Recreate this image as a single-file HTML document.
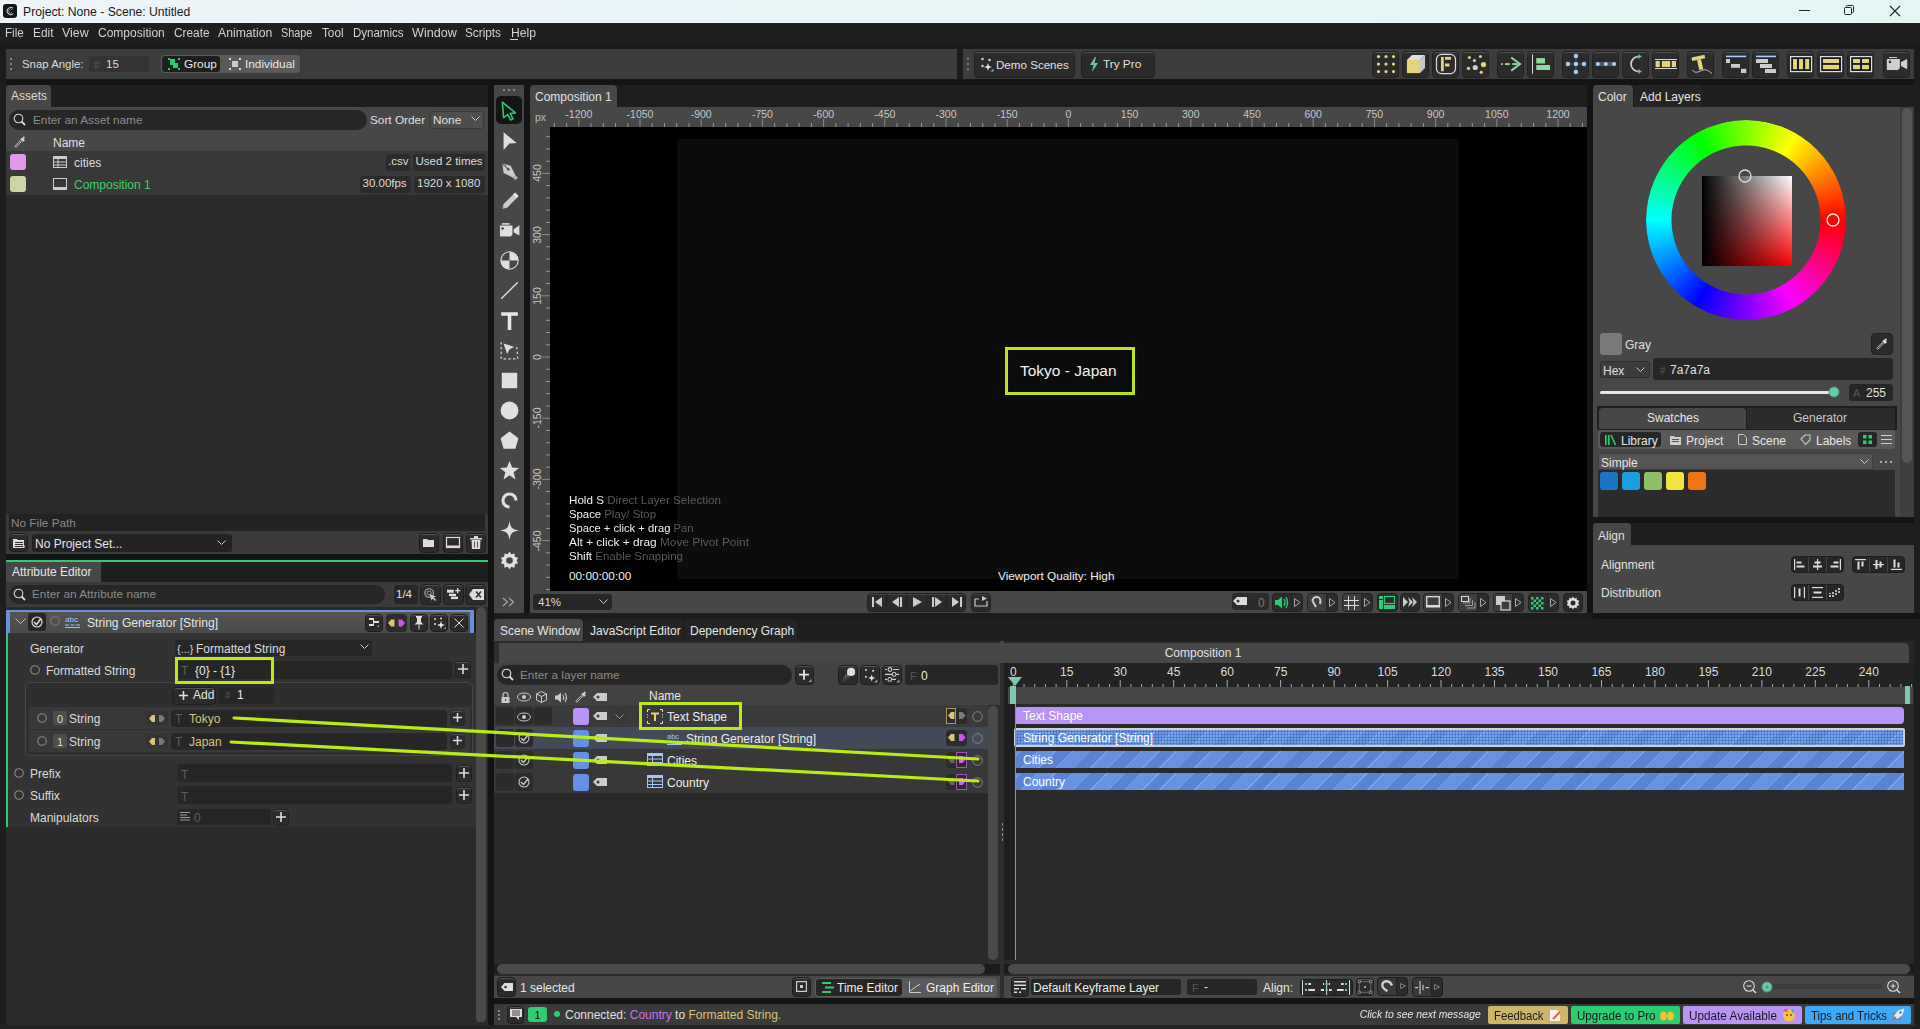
<!DOCTYPE html>
<html><head><meta charset="utf-8">
<style>
*{box-sizing:border-box;margin:0;padding:0}
html,body{width:1920px;height:1029px;overflow:hidden;background:#1c1c1c;font-family:"Liberation Sans",sans-serif;font-size:12px;color:#dcdcdc}
.a{position:absolute}
.t{position:absolute;white-space:nowrap;line-height:1}
svg{position:absolute;overflow:visible}
</style></head><body>
<div class="a" style="left:0px;top:0px;width:1920px;height:23px;background:linear-gradient(90deg,#eef3f7 0%,#e8f4f7 35%,#e3f6f4 100%);"></div>
<div class="a" style="left:3px;top:4px;width:14px;height:14px;background:#141414;border-radius:3px"></div>
<svg style="left:3px;top:4px;" width="14" height="14" viewBox="0 0 14 14"><path d="M10.2 4.3 A3.6 3.6 0 1 0 10.2 9.7" fill="none" stroke="#cfcfcf" stroke-width="1.1"/><path d="M9 5.6 A2 2 0 1 0 9 8.4" fill="none" stroke="#9a9a9a" stroke-width="0.8"/></svg>
<div class="t" style="left:23px;top:5.67px;font-size:12.2px;color:#1a1a1a;">Project: None - Scene: Untitled</div>
<div class="a" style="left:1799px;top:10px;width:11px;height:1px;background:#222;"></div>
<svg style="left:1843px;top:4px;" width="12" height="12" viewBox="0 0 12 12"><rect x="1.5" y="3.5" width="7" height="7" rx="1" fill="none" stroke="#222" stroke-width="1"/><path d="M3.5 3.5 V2.5 a1 1 0 0 1 1 -1 H9.5 a1 1 0 0 1 1 1 V7.5 a1 1 0 0 1 -1 1 H8.5" fill="none" stroke="#222" stroke-width="1"/></svg>
<svg style="left:1889px;top:4.5px;" width="12" height="12" viewBox="0 0 12 12"><path d="M1 1 L11 11 M11 1 L1 11" stroke="#222" stroke-width="1.1"/></svg>
<div class="a" style="left:0px;top:23px;width:1920px;height:20px;background:#1f1f1f;"></div>
<div class="a" style="left:0px;top:43px;width:1920px;height:6px;background:#1b1b1b;"></div>
<div class="t" style="left:5px;top:26.84px;font-size:12px;color:#d2d2d2;transform:scaleX(0.9696);transform-origin:left;">File</div>
<div class="t" style="left:32.5px;top:26.84px;font-size:12px;color:#d2d2d2;transform:scaleX(0.9914);transform-origin:left;">Edit</div>
<div class="t" style="left:62px;top:26.84px;font-size:12px;color:#d2d2d2;transform:scaleX(1.0370);transform-origin:left;">View</div>
<div class="t" style="left:97.5px;top:26.84px;font-size:12px;color:#d2d2d2;transform:scaleX(1.0008);transform-origin:left;">Composition</div>
<div class="t" style="left:173.5px;top:26.84px;font-size:12px;color:#d2d2d2;transform:scaleX(0.9856);transform-origin:left;">Create</div>
<div class="t" style="left:218.25px;top:26.84px;font-size:12px;color:#d2d2d2;transform:scaleX(1.0166);transform-origin:left;">Animation</div>
<div class="t" style="left:281.25px;top:26.84px;font-size:12px;color:#d2d2d2;transform:scaleX(0.9006);transform-origin:left;">Shape</div>
<div class="t" style="left:321.75px;top:26.84px;font-size:12px;color:#d2d2d2;transform:scaleX(0.9766);transform-origin:left;">Tool</div>
<div class="t" style="left:352.5px;top:26.84px;font-size:12px;color:#d2d2d2;transform:scaleX(0.9587);transform-origin:left;">Dynamics</div>
<div class="t" style="left:412px;top:26.84px;font-size:12px;color:#d2d2d2;transform:scaleX(1.0485);transform-origin:left;">Window</div>
<div class="t" style="left:465px;top:26.84px;font-size:12px;color:#d2d2d2;transform:scaleX(0.9816);transform-origin:left;">Scripts</div>
<div class="t" style="left:510.5px;top:26.84px;font-size:12px;color:#d2d2d2;transform:scaleX(1.0129);transform-origin:left;">Help</div>
<div class="a" style="left:510px;top:39px;width:8px;height:1px;background:#d2d2d2;"></div>
<div class="a" style="left:6px;top:49px;width:951px;height:30px;background:#3c3c3c;"></div>
<div class="a" style="left:6px;top:79px;width:1908px;height:6px;background:#141414;"></div>
<div class="a" style="left:10px;top:58px;width:2px;height:2px;background:#888;"></div>
<div class="a" style="left:10px;top:63px;width:2px;height:2px;background:#888;"></div>
<div class="a" style="left:10px;top:68px;width:2px;height:2px;background:#888;"></div>
<div class="t" style="left:22px;top:59.35px;font-size:11.4px;color:#dcdcdc;">Snap Angle:</div>
<div class="a" style="left:89px;top:56px;width:60px;height:16px;background:#333333;border-radius:3px"></div>
<div class="t" style="left:94px;top:60.53px;font-size:10px;color:#5a5a5a;">#</div>
<div class="t" style="left:106px;top:59.27px;font-size:11.5px;color:#dcdcdc;">15</div>
<div class="a" style="left:161px;top:55px;width:139px;height:18px;background:#5a5a5a;border-radius:4px"></div>
<div class="a" style="left:162px;top:56px;width:58px;height:16px;background:#1e1e1e;border-radius:3px"></div>
<svg style="left:168px;top:58px;" width="12" height="12" viewBox="0 0 12 12"><rect x="0" y="0" width="2" height="2" fill="#2ecc71"/><rect x="10" y="0" width="2" height="2" fill="#2ecc71"/><rect x="0" y="10" width="2" height="2" fill="#2ecc71"/><rect x="10" y="10" width="2" height="2" fill="#2ecc71"/><rect x="2" y="1" width="5" height="6" fill="#2ecc71"/><rect x="5" y="5" width="5" height="5" fill="#2ecc71"/></svg>
<div class="t" style="left:184px;top:59.01px;font-size:11.8px;color:#e8e8e8;">Group</div>
<svg style="left:229px;top:58px;" width="12" height="12" viewBox="0 0 12 12"><rect x="0" y="0" width="2" height="2" fill="#ddd"/><rect x="10" y="0" width="2" height="2" fill="#ddd"/><rect x="0" y="10" width="2" height="2" fill="#ddd"/><rect x="10" y="10" width="2" height="2" fill="#ddd"/><rect x="3" y="3" width="6" height="6" fill="#ccc"/></svg>
<div class="t" style="left:245px;top:59.01px;font-size:11.8px;color:#e8e8e8;">Individual</div>
<div class="a" style="left:963px;top:49px;width:951px;height:30px;background:#3c3c3c;"></div>
<div class="a" style="left:967px;top:58px;width:2px;height:2px;background:#777;"></div>
<div class="a" style="left:967px;top:63px;width:2px;height:2px;background:#777;"></div>
<div class="a" style="left:967px;top:68px;width:2px;height:2px;background:#777;"></div>
<div class="a" style="left:974px;top:51px;width:101px;height:27px;background:#2b2b2b;border:1px solid #222;border-radius:4px;box-shadow:inset 0 1px 0 rgba(255,255,255,0.18)"></div>
<svg style="left:981px;top:57px;" width="16" height="16" viewBox="0 0 16 16"><circle cx="1.5" cy="2" r="1.3" fill="#ccc"/><circle cx="8.5" cy="3" r="1.3" fill="#ccc"/><circle cx="1.5" cy="9" r="1.3" fill="#ccc"/><path d="M7 6 L8 9 L11 10 L8 11 L7 14 L6 11 L3 10 L6 9Z" fill="#e6e6e6"/><path d="M9.5 14.5 L12.5 11.5 V14.5Z" fill="#6cc9a5"/></svg>
<div class="t" style="left:996px;top:59.18px;font-size:11.6px;color:#e0e0e0;">Demo Scenes</div>
<div class="a" style="left:1076px;top:63px;width:2px;height:2px;background:#2a2a2a;border-radius:1px"></div>
<div class="a" style="left:1081px;top:51px;width:74px;height:27px;background:#2b2b2b;border:1px solid #222;border-radius:4px;box-shadow:inset 0 1px 0 rgba(255,255,255,0.18)"></div>
<svg style="left:1089px;top:57px;" width="10" height="15" viewBox="0 0 10 15"><path d="M6 0 L1 8 L4.5 8 L3 15 L9 6 L5.5 6 L7 0Z" fill="#6cc9a5"/></svg>
<div class="t" style="left:1103px;top:59.01px;font-size:11.8px;color:#e0e0e0;">Try Pro</div>
<div class="a" style="left:1372px;top:51px;width:27px;height:27px;background:#2b2b2b;border:1px solid #222;border-radius:4px;box-shadow:inset 0 1px 0 rgba(255,255,255,0.18)"></div>
<svg style="left:1376px;top:55px;" width="18" height="18" viewBox="0 0 18 18"><circle cx="2.5" cy="1.6" r="1.6" fill="#e4d479"/><circle cx="2.5" cy="9.1" r="1.6" fill="#e4d479"/><circle cx="2.5" cy="16.6" r="1.6" fill="#e4d479"/><circle cx="10.0" cy="1.6" r="1.6" fill="#e4d479"/><circle cx="10.0" cy="9.1" r="1.6" fill="#e4d479"/><circle cx="10.0" cy="16.6" r="1.6" fill="#e4d479"/><circle cx="17.5" cy="1.6" r="1.6" fill="#e4d479"/><circle cx="17.5" cy="9.1" r="1.6" fill="#e4d479"/><circle cx="17.5" cy="16.6" r="1.6" fill="#e4d479"/></svg>
<div class="a" style="left:1402px;top:51px;width:27px;height:27px;background:#2b2b2b;border:1px solid #222;border-radius:4px;box-shadow:inset 0 1px 0 rgba(255,255,255,0.18)"></div>
<svg style="left:1406px;top:55px;" width="18" height="18" viewBox="0 0 18 18"><path d="M0.9 5 L6 0 L19 0 L14 5Z" fill="#e0e0e0"/><path d="M14 5 L19 0 V13 L14 18.1Z" fill="#c8c8c8"/><rect x="0.9" y="5" width="13.1" height="13.1" fill="#e4d479"/></svg>
<div class="a" style="left:1432px;top:51px;width:27px;height:27px;background:#2b2b2b;border:1px solid #222;border-radius:4px;box-shadow:inset 0 1px 0 rgba(255,255,255,0.18)"></div>
<svg style="left:1436px;top:55px;" width="18" height="18" viewBox="0 0 18 18"><rect x="0.5" y="-0.6" width="19" height="19.2" rx="5" fill="none" stroke="#ddd" stroke-width="1.2"/><rect x="5" y="1.9" width="2.75" height="14.35" fill="#e4d479"/><rect x="9" y="1.9" width="6" height="2.85" fill="#e4d479"/><rect x="9" y="8.5" width="4.4" height="3" fill="#e4d479"/></svg>
<div class="a" style="left:1462px;top:51px;width:27px;height:27px;background:#2b2b2b;border:1px solid #222;border-radius:4px;box-shadow:inset 0 1px 0 rgba(255,255,255,0.18)"></div>
<svg style="left:1466px;top:55px;" width="18" height="18" viewBox="0 0 18 18"><circle cx="3.4" cy="2.5" r="1.5" fill="#e4d479"/><circle cx="14.4" cy="1.5" r="1.5" fill="#ccc"/><circle cx="8.4" cy="5.6" r="1.6" fill="#ccc"/><circle cx="17.5" cy="9.6" r="2.6" fill="#e4d479"/><circle cx="2.5" cy="13.4" r="1.6" fill="#e4d479"/><circle cx="9.25" cy="12.5" r="2.6" fill="#ccc"/><circle cx="15.25" cy="17.25" r="1.6" fill="#e4d479"/></svg>
<div class="a" style="left:1497px;top:51px;width:27px;height:27px;background:#2b2b2b;border:1px solid #222;border-radius:4px;box-shadow:inset 0 1px 0 rgba(255,255,255,0.18)"></div>
<svg style="left:1501px;top:55px;" width="18" height="18" viewBox="0 0 18 18"><rect x="0" y="8.1" width="1.75" height="1.9" fill="#8fd9a0"/><rect x="4" y="8.1" width="4.75" height="1.9" fill="#8fd9a0"/><rect x="11.25" y="8.1" width="5.25" height="1.9" fill="#8fd9a0"/><path d="M10.25 2.5 L19 9 L10.25 15.6" fill="none" stroke="#8fd9a0" stroke-width="2"/></svg>
<div class="a" style="left:1527px;top:51px;width:27px;height:27px;background:#2b2b2b;border:1px solid #222;border-radius:4px;box-shadow:inset 0 1px 0 rgba(255,255,255,0.18)"></div>
<svg style="left:1531px;top:55px;" width="18" height="18" viewBox="0 0 18 18"><rect x="1" y="-0.6" width="1" height="19.3" fill="#ddd"/><rect x="5.25" y="3.1" width="8.75" height="5.4" fill="#8fd9a0"/><rect x="5.25" y="10" width="13.75" height="5" fill="#8fd9a0"/></svg>
<div class="a" style="left:1562px;top:51px;width:27px;height:27px;background:#2b2b2b;border:1px solid #222;border-radius:4px;box-shadow:inset 0 1px 0 rgba(255,255,255,0.18)"></div>
<svg style="left:1566px;top:55px;" width="18" height="18" viewBox="0 0 18 18"><rect x="9.3" y="1" width="1.4" height="16" fill="#555"/><rect x="1.9" y="8.3" width="16" height="1.4" fill="#555"/><circle cx="9.9" cy="1" r="2.2" fill="#9fd0ff"/><circle cx="9.9" cy="9" r="2.2" fill="#9fd0ff"/><circle cx="9.9" cy="16.9" r="2.2" fill="#9fd0ff"/><circle cx="1.9" cy="9" r="2.2" fill="#9fd0ff"/><circle cx="18" cy="9" r="2.2" fill="#9fd0ff"/></svg>
<div class="a" style="left:1592px;top:51px;width:27px;height:27px;background:#2b2b2b;border:1px solid #222;border-radius:4px;box-shadow:inset 0 1px 0 rgba(255,255,255,0.18)"></div>
<svg style="left:1596px;top:55px;" width="18" height="18" viewBox="0 0 18 18"><rect x="-0.5" y="7" width="21" height="4" rx="2" fill="#555"/><circle cx="1.8" cy="9" r="2.1" fill="#9fd0ff"/><circle cx="9.8" cy="9" r="2.1" fill="#9fd0ff"/><circle cx="18" cy="9" r="2.1" fill="#9fd0ff"/></svg>
<div class="a" style="left:1622px;top:51px;width:27px;height:27px;background:#2b2b2b;border:1px solid #222;border-radius:4px;box-shadow:inset 0 1px 0 rgba(255,255,255,0.18)"></div>
<svg style="left:1626px;top:55px;" width="18" height="18" viewBox="0 0 18 18"><path d="M13 1.5 A8 7.5 0 0 0 13 16.5" fill="none" stroke="#cfcfcf" stroke-width="1.7"/><path d="M13 -0.5 V3.5 M11 1.5 H15.5 M13 14.5 V18.5 M11 16.5 H15.5" stroke="#7cc98e" stroke-width="1.3"/></svg>
<div class="a" style="left:1652px;top:51px;width:27px;height:27px;background:#2b2b2b;border:1px solid #222;border-radius:4px;box-shadow:inset 0 1px 0 rgba(255,255,255,0.18)"></div>
<svg style="left:1656px;top:55px;" width="18" height="18" viewBox="0 0 18 18"><rect x="-1" y="4" width="22" height="1" fill="#ddd"/><rect x="-1" y="13" width="22" height="1" fill="#ddd"/><rect x="-0.4" y="6" width="4.2" height="6" fill="#e4d479"/><rect x="5.9" y="6" width="8.3" height="6" fill="#e4d479"/><rect x="15.8" y="6" width="4.2" height="6" fill="#e4d479"/></svg>
<div class="a" style="left:1687px;top:51px;width:27px;height:27px;background:#2b2b2b;border:1px solid #222;border-radius:4px;box-shadow:inset 0 1px 0 rgba(255,255,255,0.18)"></div>
<svg style="left:1691px;top:55px;" width="18" height="18" viewBox="0 0 18 18"><path d="M0.5 2.5 L13.5 -0.2 L14.2 3.3 L1.2 6Z" fill="#e4d479"/><path d="M6 5 L10 4.2 L12.3 14.2 L8.3 15Z" fill="#e4d479"/><path d="M1.5 15 C4 19.5 9 16 12 15 C15 14 18 16 21 18.5" fill="none" stroke="#cfcfcf" stroke-width="0.9"/></svg>
<div class="a" style="left:1722px;top:51px;width:27px;height:27px;background:#2b2b2b;border:1px solid #222;border-radius:4px;box-shadow:inset 0 1px 0 rgba(255,255,255,0.18)"></div>
<svg style="left:1726px;top:55px;" width="18" height="18" viewBox="0 0 18 18"><rect x="0" y="0.6" width="20.3" height="1.6" fill="#9fd0ff"/><rect x="0" y="4" width="4" height="4" fill="#ccc"/><rect x="5" y="9" width="9" height="3.8" fill="#ccc"/><rect x="15" y="13.8" width="5.3" height="4.2" fill="#ccc"/></svg>
<div class="a" style="left:1752px;top:51px;width:27px;height:27px;background:#2b2b2b;border:1px solid #222;border-radius:4px;box-shadow:inset 0 1px 0 rgba(255,255,255,0.18)"></div>
<svg style="left:1756px;top:55px;" width="18" height="18" viewBox="0 0 18 18"><rect x="0" y="0.6" width="20" height="1.6" fill="#9fd0ff"/><rect x="0" y="4" width="12" height="4" fill="#ccc"/><rect x="4" y="9" width="12" height="4" fill="#ccc"/><rect x="9" y="14" width="11" height="4" fill="#ccc"/></svg>
<div class="a" style="left:1787px;top:51px;width:27px;height:27px;background:#2b2b2b;border:1px solid #222;border-radius:4px;box-shadow:inset 0 1px 0 rgba(255,255,255,0.18)"></div>
<svg style="left:1791px;top:55px;" width="18" height="18" viewBox="0 0 18 18"><rect x="-0.4" y="1.6" width="21" height="15" fill="#1a1a22" stroke="#ddd" stroke-width="1.2"/><rect x="2" y="4" width="4" height="10.2" fill="#e4d479"/><rect x="8" y="4" width="4" height="10.2" fill="#e4d479"/><rect x="14.2" y="4" width="4" height="10.2" fill="#e4d479"/></svg>
<div class="a" style="left:1817px;top:51px;width:27px;height:27px;background:#2b2b2b;border:1px solid #222;border-radius:4px;box-shadow:inset 0 1px 0 rgba(255,255,255,0.18)"></div>
<svg style="left:1821px;top:55px;" width="18" height="18" viewBox="0 0 18 18"><rect x="-0.4" y="1.6" width="21" height="15" fill="#1a1a22" stroke="#ddd" stroke-width="1.2"/><rect x="2" y="4" width="16" height="4" fill="#e4d479"/><rect x="2" y="9.9" width="16" height="4.3" fill="#e4d479"/></svg>
<div class="a" style="left:1847px;top:51px;width:27px;height:27px;background:#2b2b2b;border:1px solid #222;border-radius:4px;box-shadow:inset 0 1px 0 rgba(255,255,255,0.18)"></div>
<svg style="left:1851px;top:55px;" width="18" height="18" viewBox="0 0 18 18"><rect x="-0.4" y="1.6" width="21" height="15" fill="#1a1a22" stroke="#ddd" stroke-width="1.2"/><rect x="2" y="4" width="7" height="4" fill="#e4d479"/><rect x="11" y="4" width="7" height="4" fill="#e4d479"/><rect x="2" y="9.9" width="7" height="4.3" fill="#e4d479"/><rect x="11" y="9.9" width="7" height="4.3" fill="#e4d479"/></svg>
<div class="a" style="left:1883px;top:51px;width:27px;height:27px;background:#2b2b2b;border:1px solid #222;border-radius:4px;box-shadow:inset 0 1px 0 rgba(255,255,255,0.18)"></div>
<svg style="left:1887px;top:55px;" width="18" height="18" viewBox="0 0 18 18"><rect x="2" y="2" width="8" height="1" fill="#ccc"/><path d="M-0.2 4 H12.9 V13 L11 14.9 H-0.2Z" fill="#d0d0d0"/><circle cx="3" cy="6.9" r="1.3" fill="#333"/><path d="M14 6.9 L20.2 4 V14.2 L14 10.9Z" fill="#d0d0d0"/></svg>
<div class="a" style="left:1492px;top:63px;width:2px;height:2px;background:#2a2a2a;border-radius:1px"></div>
<div class="a" style="left:1557px;top:63px;width:2px;height:2px;background:#2a2a2a;border-radius:1px"></div>
<div class="a" style="left:1682px;top:63px;width:2px;height:2px;background:#2a2a2a;border-radius:1px"></div>
<div class="a" style="left:1717px;top:63px;width:2px;height:2px;background:#2a2a2a;border-radius:1px"></div>
<div class="a" style="left:1782px;top:63px;width:2px;height:2px;background:#2a2a2a;border-radius:1px"></div>
<div class="a" style="left:1877px;top:63px;width:2px;height:2px;background:#2a2a2a;border-radius:1px"></div>
<div class="a" style="left:6px;top:85px;width:482px;height:22px;background:#1e1e1e;"></div>
<div class="a" style="left:6px;top:85px;width:45px;height:22px;background:#474747;border-radius:4px 4px 0 0"></div>
<div class="t" style="left:11px;top:89.84px;font-size:12px;color:#dcdcdc;">Assets</div>
<div class="a" style="left:6px;top:107px;width:482px;height:44px;background:#474747;"></div>
<div class="a" style="left:9px;top:110px;width:358px;height:20px;background:#262626;border-radius:10px"></div>
<svg style="left:13px;top:113px;" width="14" height="14" viewBox="0 0 14 14"><circle cx="5.5" cy="5.5" r="4.3" fill="none" stroke="#ddd" stroke-width="1.1"/><path d="M8.5 8.5 L12 12" stroke="#ddd" stroke-width="1.8"/></svg>
<div class="t" style="left:33px;top:115.01px;font-size:11.8px;color:#8c8c8c;">Enter an Asset name</div>
<div class="t" style="left:370px;top:115.01px;font-size:11.8px;color:#e0e0e0;">Sort Order</div>
<div class="a" style="left:430px;top:111px;width:54px;height:18px;background:#4e4e4e;border:1px solid #3a3a3a;border-radius:3px"></div>
<div class="t" style="left:433px;top:115.01px;font-size:11.8px;color:#e0e0e0;">None</div>
<svg style="left:471px;top:116px;" width="9" height="6" viewBox="0 0 9 6"><path d="M0.5 0.5 L4.5 4.5 L8.5 0.5" fill="none" stroke="#ccc" stroke-width="1"/></svg>
<svg style="left:14px;top:136px;" width="12" height="12" viewBox="0 0 12 12"><path d="M1 11 L7 5" stroke="#bbb" stroke-width="2.2"/><path d="M1.5 10.5 L6.5 5.5" stroke="#474747" stroke-width="0.9"/><path d="M6 3 L9 6 L11 4 L10 3 L11 1 L9.5 0.5 L8 2Z" fill="#ccc"/></svg>
<div class="t" style="left:53px;top:136.84px;font-size:12px;color:#e0e0e0;">Name</div>
<div class="a" style="left:6px;top:151px;width:482px;height:44px;background:#383838;"></div>
<div class="a" style="left:10px;top:154px;width:16px;height:16px;background:#dd99ee;border-radius:3px"></div>
<div class="a" style="left:10px;top:176px;width:16px;height:16px;background:#cdd4a4;border-radius:3px"></div>
<svg style="left:53px;top:156px;" width="14" height="12" viewBox="0 0 14 12"><rect x="0.5" y="0.5" width="13" height="11" fill="none" stroke="#ccc"/><rect x="0.5" y="0.5" width="13" height="2.5" fill="#ccc"/><path d="M0.5 6 H13.5 M0.5 9 H13.5 M5 3 V11.5" stroke="#ccc" stroke-width="1"/></svg>
<div class="t" style="left:74px;top:156.84px;font-size:12px;color:#dcdcdc;">cities</div>
<svg style="left:53px;top:178px;" width="14" height="12" viewBox="0 0 14 12"><rect x="0.5" y="0.5" width="13" height="11" fill="none" stroke="#ccc"/><rect x="0.5" y="9" width="13" height="2.5" fill="#ccc"/></svg>
<div class="t" style="left:74px;top:178.84px;font-size:12px;color:#3dd068;">Composition 1</div>
<div class="a" style="left:386px;top:154px;width:24px;height:17px;background:#2b2b2b;border-radius:3px"></div>
<div class="t" style="left:388px;top:156.27px;font-size:11.5px;color:#dcdcdc;">.csv</div>
<div class="a" style="left:413px;top:154px;width:72px;height:17px;background:#2b2b2b;border-radius:3px"></div>
<div class="t" style="left:415.5px;top:156.27px;font-size:11.5px;color:#dcdcdc;">Used 2 times</div>
<div class="a" style="left:360px;top:176px;width:51px;height:17px;background:#2b2b2b;border-radius:3px"></div>
<div class="t" style="left:362.5px;top:178.27px;font-size:11.5px;color:#dcdcdc;">30.00fps</div>
<div class="a" style="left:414px;top:176px;width:71px;height:17px;background:#2b2b2b;border-radius:3px"></div>
<div class="t" style="left:417px;top:178.27px;font-size:11.5px;color:#dcdcdc;">1920 x 1080</div>
<div class="a" style="left:6px;top:195px;width:482px;height:319px;background:#2a2a2a;"></div>
<div class="a" style="left:6px;top:514px;width:482px;height:40px;background:#3a3a3a;"></div>
<div class="a" style="left:9px;top:514px;width:476px;height:17px;background:#232323;"></div>
<div class="t" style="left:11px;top:518.01px;font-size:11.8px;color:#8a8a8a;">No File Path</div>
<div class="a" style="left:9px;top:533px;width:19px;height:19px;background:#2b2b2b;border:1px solid #1e1e1e;border-radius:4px;box-shadow:inset 0 1px 0 rgba(255,255,255,0.18)"></div>
<svg style="left:13px;top:537px;" width="12" height="11" viewBox="0 0 12 11"><path d="M0 2 H4 L5 3 H11 V11 H0Z" fill="#ddd"/><rect x="2" y="5" width="8" height="1" fill="#333"/><rect x="2" y="7" width="8" height="1" fill="#333"/><rect x="2" y="9" width="8" height="1" fill="#333"/><path d="M10 10 L12 8 V11Z" fill="#6cc9a5"/></svg>
<div class="a" style="left:32px;top:534px;width:200px;height:18px;background:#232323;border-radius:3px"></div>
<div class="t" style="left:35px;top:537.84px;font-size:12px;color:#e6e6e6;">No Project Set...</div>
<svg style="left:217px;top:540px;" width="9" height="6" viewBox="0 0 9 6"><path d="M0.5 0.5 L4.5 4.5 L8.5 0.5" fill="none" stroke="#ccc" stroke-width="1"/></svg>
<div class="a" style="left:419px;top:533px;width:20px;height:20px;background:#2b2b2b;border:1px solid #1e1e1e;border-radius:4px;box-shadow:inset 0 1px 0 rgba(255,255,255,0.18)"></div>
<div class="a" style="left:443px;top:533px;width:20px;height:20px;background:#2b2b2b;border:1px solid #1e1e1e;border-radius:4px;box-shadow:inset 0 1px 0 rgba(255,255,255,0.18)"></div>
<div class="a" style="left:466px;top:533px;width:20px;height:20px;background:#2b2b2b;border:1px solid #1e1e1e;border-radius:4px;box-shadow:inset 0 1px 0 rgba(255,255,255,0.18)"></div>
<svg style="left:423px;top:537px;" width="12" height="12" viewBox="0 0 12 12"><path d="M0 2 H4 L5 3 H11 V10 H0Z" fill="#ddd"/></svg>
<svg style="left:446px;top:537px;" width="14" height="12" viewBox="0 0 14 12"><rect x="0.5" y="0.5" width="13" height="10" fill="none" stroke="#ddd" stroke-width="1.2"/><rect x="0.5" y="8.5" width="13" height="2" fill="#ddd"/></svg>
<svg style="left:470px;top:536px;" width="12" height="13" viewBox="0 0 12 13"><rect x="0" y="2" width="12" height="1.5" fill="#ddd"/><rect x="4" y="0" width="4" height="2" fill="#ddd"/><path d="M1.5 4 H10.5 L10 13 H2Z" fill="#ddd"/><rect x="4" y="5.5" width="1" height="6" fill="#555"/><rect x="7" y="5.5" width="1" height="6" fill="#555"/></svg>
<div class="a" style="left:6px;top:554px;width:482px;height:6px;background:#141414;"></div>
<div class="a" style="left:6px;top:560px;width:482px;height:2px;background:#2ecc71;"></div>
<div class="a" style="left:6px;top:562px;width:482px;height:20px;background:#1e1e1e;"></div>
<div class="a" style="left:6px;top:562px;width:95px;height:20px;background:#474747;"></div>
<div class="t" style="left:12px;top:565.84px;font-size:12px;color:#e6e6e6;">Attribute Editor</div>
<div class="a" style="left:6px;top:582px;width:482px;height:25px;background:#3a3a3a;"></div>
<div class="a" style="left:9px;top:585px;width:376px;height:19px;background:#262626;border-radius:10px"></div>
<svg style="left:13px;top:588px;" width="14" height="14" viewBox="0 0 14 14"><circle cx="5.5" cy="5.5" r="4.3" fill="none" stroke="#ddd" stroke-width="1.1"/><path d="M8.5 8.5 L12 12" stroke="#ddd" stroke-width="1.8"/></svg>
<div class="t" style="left:32px;top:589.01px;font-size:11.8px;color:#8c8c8c;">Enter an Attribute name</div>
<div class="a" style="left:394px;top:585px;width:24px;height:19px;background:#262626;border-radius:3px"></div>
<div class="t" style="left:396px;top:589.27px;font-size:11.5px;color:#e0e0e0;">1/4</div>
<div class="a" style="left:420px;top:584px;width:21px;height:21px;background:#2b2b2b;border:1px solid #1e1e1e;border-radius:4px;box-shadow:inset 0 1px 0 rgba(255,255,255,0.18)"></div>
<div class="a" style="left:443px;top:584px;width:21px;height:21px;background:#2b2b2b;border:1px solid #1e1e1e;border-radius:4px;box-shadow:inset 0 1px 0 rgba(255,255,255,0.18)"></div>
<div class="a" style="left:465px;top:584px;width:21px;height:21px;background:#2b2b2b;border:1px solid #1e1e1e;border-radius:4px;box-shadow:inset 0 1px 0 rgba(255,255,255,0.18)"></div>
<svg style="left:424px;top:588px;" width="13" height="13" viewBox="0 0 13 13"><circle cx="5.1" cy="5" r="4.3" fill="none" stroke="#aaa" stroke-width="1.1"/><circle cx="5.1" cy="5" r="2" fill="none" stroke="#aaa" stroke-width="0.9"/><path d="M5.5 6 L12 8.5 L9.8 9.6 L12.3 12.1 L11.2 13.1 L8.7 10.6 L7.6 12.8Z" fill="#ccc"/></svg>
<svg style="left:446px;top:588px;" width="15" height="13" viewBox="0 0 15 13"><rect x="1" y="1.7" width="6.8" height="3" fill="#ddd"/><rect x="3" y="5.7" width="7" height="2.4" fill="#ddd"/><rect x="5" y="8.7" width="7" height="2.4" fill="#ddd"/><path d="M11.7 0 V5.2 M9.1 2.6 H14.3" stroke="#ddd" stroke-width="1.3"/></svg>
<svg style="left:469px;top:589px;" width="15" height="11" viewBox="0 0 15 11"><path d="M4 0 H15 V11 H4 L0 5.5Z" fill="#ddd"/><path d="M7 2.5 L12 8.5 M12 2.5 L7 8.5" stroke="#333" stroke-width="1.6"/></svg>
<div class="a" style="left:6px;top:607px;width:482px;height:3px;background:#2a2a2a;"></div>
<div class="a" style="left:6px;top:610px;width:468px;height:23px;background:linear-gradient(#555,#4a4a4a);"></div>
<div class="a" style="left:6px;top:610px;width:468px;height:2px;background:#6a8fdb;"></div>
<div class="a" style="left:6px;top:610px;width:4px;height:23px;background:#6a8fdb;"></div>
<div class="a" style="left:470px;top:610px;width:4px;height:23px;background:#6a8fdb;"></div>
<svg style="left:15px;top:618px;" width="11" height="7" viewBox="0 0 11 7"><path d="M0.5 0.5 L5.5 5.5 L10.5 0.5" fill="none" stroke="#bbb" stroke-width="1"/></svg>
<div class="a" style="left:28px;top:613px;width:18px;height:18px;background:#262626;border-radius:3px"></div>
<svg style="left:31px;top:616px;" width="12" height="12" viewBox="0 0 12 12"><circle cx="6" cy="6" r="5" fill="none" stroke="#ddd" stroke-width="1.2"/><path d="M3 6 L5.5 8.5 L10 2.5" fill="none" stroke="#ddd" stroke-width="1.5"/></svg>
<svg style="left:50px;top:616px;" width="10" height="10" viewBox="0 0 10 10"><circle cx="5" cy="5" r="4.3" fill="none" stroke="#777" stroke-width="1.1"/></svg>
<svg style="left:65px;top:615px;" width="15" height="14" viewBox="0 0 15 14"><text x="0" y="7" font-size="8" fill="#9fc6ff" font-family="Liberation Sans">abc</text><path d="M0 10 H4 M5.5 10 H9.5 M11 10 H15 M0 12.5 H15" stroke="#9fc6ff" stroke-width="1"/></svg>
<div class="t" style="left:87px;top:616.76px;font-size:12.1px;color:#e6e6e6;">String Generator [String]</div>
<div class="a" style="left:365px;top:614px;width:18px;height:18px;background:#2b2b2b;border:1px solid #1e1e1e;border-radius:4px;box-shadow:inset 0 1px 0 rgba(255,255,255,0.18)"></div>
<div class="a" style="left:410px;top:614px;width:18px;height:18px;background:#2b2b2b;border:1px solid #1e1e1e;border-radius:4px;box-shadow:inset 0 1px 0 rgba(255,255,255,0.18)"></div>
<div class="a" style="left:430px;top:614px;width:18px;height:18px;background:#2b2b2b;border:1px solid #1e1e1e;border-radius:4px;box-shadow:inset 0 1px 0 rgba(255,255,255,0.18)"></div>
<div class="a" style="left:450px;top:614px;width:18px;height:18px;background:#2b2b2b;border:1px solid #1e1e1e;border-radius:4px;box-shadow:inset 0 1px 0 rgba(255,255,255,0.18)"></div>
<div class="a" style="left:386px;top:614px;width:21px;height:18px;background:#2b2b2b;border-radius:4px"></div>
<svg style="left:369px;top:618px;" width="10" height="9" viewBox="0 0 10 9"><rect x="0" y="0" width="4" height="2" fill="#ddd"/><rect x="0" y="6" width="4" height="2" fill="#ddd"/><rect x="4" y="0" width="1" height="8" fill="#ddd"/><rect x="5" y="3" width="5" height="2" fill="#ddd"/><path d="M8 9 L10 7 V9Z" fill="#6cc9a5"/></svg>
<svg style="left:388px;top:618px;" width="18" height="10" viewBox="0 0 18 10"><path d="M0 5 L3 1.5 H6.5 V8.5 H3Z" fill="#d9c27a"/><path d="M10.5 1.5 H14 L17 5 L14 8.5 H10.5Z" fill="#cc55ee"/><rect x="8.5" y="0" width="1" height="10" fill="#3a3a3a"/></svg>
<svg style="left:414px;top:616px;" width="10" height="14" viewBox="0 0 10 14"><path d="M2 0 H8 V1.5 L7 2 V6 L9.5 8.5 H0.5 L3 6 V2 L2 1.5Z" fill="#ddd"/><rect x="4.5" y="8.5" width="1" height="5" fill="#ddd"/></svg>
<svg style="left:433px;top:617px;" width="13" height="13" viewBox="0 0 13 13"><circle cx="2" cy="2" r="1" fill="#ddd"/><circle cx="8" cy="1.5" r="1" fill="#ddd"/><circle cx="2" cy="7" r="1" fill="#ddd"/><path d="M8 4 L9 7 L12 8 L9 9 L8 12 L7 9 L4 8 L7 7Z" fill="#eee"/><path d="M11 12 L13 10 V12Z" fill="#6cc9a5"/></svg>
<svg style="left:454px;top:618px;" width="10" height="10" viewBox="0 0 10 10"><path d="M0.5 0.5 L9.5 9.5 M9.5 0.5 L0.5 9.5" stroke="#ddd" stroke-width="1"/></svg>
<div class="a" style="left:6px;top:633px;width:470px;height:194px;background:#323232;"></div>
<div class="a" style="left:6px;top:633px;width:2px;height:194px;background:#2ecc71;"></div>
<div class="a" style="left:476px;top:607px;width:12px;height:418px;background:#2a2a2a;"></div>
<div class="a" style="left:476px;top:607px;width:10px;height:416px;background:#4a4a4a;border-radius:5px"></div>
<div class="t" style="left:30px;top:642.84px;font-size:12px;color:#dcdcdc;">Generator</div>
<div class="a" style="left:175px;top:640px;width:197px;height:16px;background:#262626;border-radius:3px"></div>
<div class="t" style="left:177px;top:643.69px;font-size:11px;color:#dcdcdc;">{...}</div>
<div class="t" style="left:196px;top:642.84px;font-size:12px;color:#dcdcdc;">Formatted String</div>
<svg style="left:360px;top:644px;" width="9" height="6" viewBox="0 0 9 6"><path d="M0.5 0.5 L4.5 4.5 L8.5 0.5" fill="none" stroke="#ccc" stroke-width="1"/></svg>
<svg style="left:30px;top:665px;" width="10" height="10" viewBox="0 0 10 10"><circle cx="5" cy="5" r="4.3" fill="none" stroke="#8a8a8a" stroke-width="1.1"/></svg>
<div class="t" style="left:46px;top:664.84px;font-size:12px;color:#dcdcdc;">Formatted String</div>
<div class="a" style="left:176px;top:661px;width:276px;height:18px;background:#262626;border-radius:3px"></div>
<div class="t" style="left:181px;top:664.84px;font-size:12px;color:#5c5c5c;">T</div>
<div class="t" style="left:195px;top:664.84px;font-size:12px;color:#e6e6e6;">{0} - {1}</div>
<div class="a" style="left:455px;top:661px;width:16px;height:17px;background:#2b2b2b;border:1px solid #222;border-radius:3px;box-shadow:inset 0 1px 0 rgba(255,255,255,0.18)"></div>
<svg style="left:458px;top:664px;" width="10" height="10" viewBox="0 0 10 10"><path d="M5 0 V10 M0 5 H10" stroke="#ddd" stroke-width="1.6"/></svg>
<div class="a" style="left:25px;top:682px;width:448px;height:74px;background:#2e2e2e;border:1.5px solid #474747;border-radius:5px"></div>
<div class="a" style="left:172px;top:687px;width:44px;height:18px;background:#2b2b2b;border:1px solid #1e1e1e;border-radius:4px;box-shadow:inset 0 1px 0 rgba(255,255,255,0.18)"></div>
<svg style="left:179px;top:691px;" width="9" height="9" viewBox="0 0 9 9"><path d="M4.5 0 V9 M0 4.5 H9" stroke="#ddd" stroke-width="1.6"/></svg>
<div class="t" style="left:193px;top:688.84px;font-size:12px;color:#e6e6e6;">Add</div>
<div class="a" style="left:219px;top:687px;width:55px;height:17px;background:#262626;border-radius:3px"></div>
<div class="t" style="left:225px;top:690.53px;font-size:10px;color:#555;">#</div>
<div class="t" style="left:237px;top:688.84px;font-size:12px;color:#e6e6e6;">1</div>
<div class="a" style="left:29px;top:707px;width:441px;height:22px;background:#383838;"></div>
<svg style="left:37px;top:713px;" width="10" height="10" viewBox="0 0 10 10"><circle cx="5" cy="5" r="4.3" fill="none" stroke="#8a8a8a" stroke-width="1.1"/></svg>
<div class="a" style="left:53px;top:711px;width:14px;height:14px;background:#4d4d4d;border-radius:2px"></div>
<div class="t" style="left:60px;top:713.69px;font-size:11px;color:#dcdcdc;transform:translateX(-50%);">0</div>
<div class="t" style="left:69px;top:712.84px;font-size:12px;color:#dcdcdc;">String</div>
<div class="a" style="left:146px;top:711px;width:11px;height:14px;background:#333;border-radius:2px"></div>
<div class="a" style="left:157px;top:711px;width:11px;height:14px;background:#333;border-radius:2px"></div>
<svg style="left:149px;top:715px;" width="16" height="7" viewBox="0 0 16 7"><path d="M0 3.5 L3 0 H6 V7 H3Z" fill="#d9c27a"/><path d="M10 0 H13 L16 3.5 L13 7 H10Z" fill="#7a7a7a"/></svg>
<div class="a" style="left:171px;top:710px;width:276px;height:17px;background:#262626;border-radius:3px"></div>
<div class="t" style="left:175px;top:712.84px;font-size:12px;color:#5c5c5c;">T</div>
<div class="t" style="left:189px;top:712.84px;font-size:12px;color:#d9c27a;">Tokyo</div>
<div class="a" style="left:450px;top:710px;width:15px;height:16px;background:#2b2b2b;border:1px solid #2a2a2a;border-radius:3px;box-shadow:inset 0 1px 0 rgba(255,255,255,0.18)"></div>
<svg style="left:453px;top:713px;" width="9" height="9" viewBox="0 0 9 9"><path d="M4.5 0 V9 M0 4.5 H9" stroke="#ddd" stroke-width="1.5"/></svg>
<div class="a" style="left:29px;top:730px;width:441px;height:22px;background:#383838;"></div>
<svg style="left:37px;top:736px;" width="10" height="10" viewBox="0 0 10 10"><circle cx="5" cy="5" r="4.3" fill="none" stroke="#8a8a8a" stroke-width="1.1"/></svg>
<div class="a" style="left:53px;top:734px;width:14px;height:14px;background:#4d4d4d;border-radius:2px"></div>
<div class="t" style="left:60px;top:736.69px;font-size:11px;color:#dcdcdc;transform:translateX(-50%);">1</div>
<div class="t" style="left:69px;top:735.84px;font-size:12px;color:#dcdcdc;">String</div>
<div class="a" style="left:146px;top:734px;width:11px;height:14px;background:#333;border-radius:2px"></div>
<div class="a" style="left:157px;top:734px;width:11px;height:14px;background:#333;border-radius:2px"></div>
<svg style="left:149px;top:738px;" width="16" height="7" viewBox="0 0 16 7"><path d="M0 3.5 L3 0 H6 V7 H3Z" fill="#d9c27a"/><path d="M10 0 H13 L16 3.5 L13 7 H10Z" fill="#7a7a7a"/></svg>
<div class="a" style="left:171px;top:733px;width:276px;height:17px;background:#262626;border-radius:3px"></div>
<div class="t" style="left:175px;top:735.84px;font-size:12px;color:#5c5c5c;">T</div>
<div class="t" style="left:189px;top:735.84px;font-size:12px;color:#d9c27a;">Japan</div>
<div class="a" style="left:450px;top:733px;width:15px;height:16px;background:#2b2b2b;border:1px solid #2a2a2a;border-radius:3px;box-shadow:inset 0 1px 0 rgba(255,255,255,0.18)"></div>
<svg style="left:453px;top:736px;" width="9" height="9" viewBox="0 0 9 9"><path d="M4.5 0 V9 M0 4.5 H9" stroke="#ddd" stroke-width="1.5"/></svg>
<div class="a" style="left:6px;top:757px;width:470px;height:70px;background:#323232;"></div>
<div class="a" style="left:6px;top:757px;width:2px;height:70px;background:#2ecc71;"></div>
<svg style="left:14px;top:768px;" width="10" height="10" viewBox="0 0 10 10"><circle cx="5" cy="5" r="4.3" fill="none" stroke="#8a8a8a" stroke-width="1.1"/></svg>
<div class="t" style="left:30px;top:767.84px;font-size:12px;color:#dcdcdc;">Prefix</div>
<div class="a" style="left:177px;top:764px;width:275px;height:18px;background:#262626;border-radius:3px"></div>
<div class="t" style="left:181px;top:768.84px;font-size:12px;color:#5c5c5c;">T</div>
<div class="a" style="left:456px;top:765px;width:16px;height:17px;background:#2b2b2b;border:1px solid #222;border-radius:3px;box-shadow:inset 0 1px 0 rgba(255,255,255,0.18)"></div>
<svg style="left:459px;top:768px;" width="10" height="10" viewBox="0 0 10 10"><path d="M5 0 V10 M0 5 H10" stroke="#ddd" stroke-width="1.6"/></svg>
<svg style="left:14px;top:790px;" width="10" height="10" viewBox="0 0 10 10"><circle cx="5" cy="5" r="4.3" fill="none" stroke="#8a8a8a" stroke-width="1.1"/></svg>
<div class="t" style="left:30px;top:789.84px;font-size:12px;color:#dcdcdc;">Suffix</div>
<div class="a" style="left:177px;top:786px;width:275px;height:18px;background:#262626;border-radius:3px"></div>
<div class="t" style="left:181px;top:790.84px;font-size:12px;color:#5c5c5c;">T</div>
<div class="a" style="left:456px;top:787px;width:16px;height:17px;background:#2b2b2b;border:1px solid #222;border-radius:3px;box-shadow:inset 0 1px 0 rgba(255,255,255,0.18)"></div>
<svg style="left:459px;top:790px;" width="10" height="10" viewBox="0 0 10 10"><path d="M5 0 V10 M0 5 H10" stroke="#ddd" stroke-width="1.6"/></svg>
<div class="t" style="left:30px;top:811.84px;font-size:12px;color:#dcdcdc;">Manipulators</div>
<div class="a" style="left:177px;top:809px;width:94px;height:16px;background:#262626;border-radius:3px"></div>
<svg style="left:180px;top:812px;" width="10" height="9" viewBox="0 0 10 9"><path d="M0 0.5 H10 M0 3 H7 M0 5.5 H10 M0 8 H10" stroke="#aaa" stroke-width="0.9"/></svg>
<div class="t" style="left:194px;top:811.84px;font-size:12px;color:#5c5c5c;">0</div>
<div class="a" style="left:273px;top:809px;width:16px;height:17px;background:#2b2b2b;border:1px solid #222;border-radius:3px;box-shadow:inset 0 1px 0 rgba(255,255,255,0.18)"></div>
<svg style="left:276px;top:812px;" width="10" height="10" viewBox="0 0 10 10"><path d="M5 0 V10 M0 5 H10" stroke="#ddd" stroke-width="1.6"/></svg>
<div class="a" style="left:6px;top:827px;width:470px;height:198px;background:#2a2a2a;"></div>
<div class="a" style="left:476px;top:1022px;width:12px;height:3px;background:#2a2a2a;"></div>
<div class="a" style="left:0px;top:1025px;width:1920px;height:4px;background:#232323;"></div>
<div class="a" style="left:0px;top:85px;width:6px;height:940px;background:#1e1e1e;"></div>
<div class="a" style="left:488px;top:85px;width:6px;height:940px;background:#141414;"></div>
<div class="a" style="left:494px;top:85px;width:30px;height:528px;background:#474747;"></div>
<div class="a" style="left:503px;top:89px;width:2px;height:2px;background:#888;"></div>
<div class="a" style="left:508px;top:89px;width:2px;height:2px;background:#888;"></div>
<div class="a" style="left:513px;top:89px;width:2px;height:2px;background:#888;"></div>
<div class="a" style="left:494px;top:99px;width:30px;height:1px;background:#3e3e3e;"></div>
<div class="a" style="left:496px;top:96px;width:26px;height:28px;background:#141414;border-radius:5px"></div>
<svg style="left:499.5px;top:100.5px" width="19" height="19" viewBox="0 0 16 16"><path d="M2 1 L13 10 L8.5 10.5 L11 15 L9 16 L6.5 11.5 L3 14Z" fill="none" stroke="#2ecc71" stroke-width="1.3" stroke-linejoin="round"/></svg>
<svg style="left:499.5px;top:130.5px" width="19" height="19" viewBox="0 0 16 16"><path d="M3 1 L14 10 L8 10.5 L3 16Z" fill="#ddd"/></svg>
<svg style="left:499.5px;top:160.5px" width="19" height="19" viewBox="0 0 16 16"><path d="M2 2 L9 4 L13 12 L11 14 L3 10Z" fill="#ccc"/><path d="M2 2 L7 7" stroke="#555" stroke-width="1"/><circle cx="7" cy="7" r="1.2" fill="#555"/><path d="M11 14 L13 16 L15 14 L13 12Z" fill="#bbb"/></svg>
<svg style="left:499.5px;top:190.5px" width="19" height="19" viewBox="0 0 16 16"><path d="M2 15 L3 11 L12 2 L15 5 L6 14Z" fill="#ccc"/><path d="M12 2 L15 5" stroke="#eee" stroke-width="2"/><path d="M2 15 L3 13 L4 14Z" fill="#999"/></svg>
<svg style="left:499.5px;top:220.5px" width="19" height="19" viewBox="0 0 16 16"><rect x="1.5" y="1.8" width="6.5" height="1.3" fill="#ddd"/><path d="M0 3.8 H10.5 V11.5 L9 13 H0Z" fill="#e0e0e0"/><circle cx="2.2" cy="6.3" r="1" fill="#333"/><path d="M11.5 7 L16.3 3.6 V12.3 L11.5 9.5Z" fill="#e0e0e0"/></svg>
<svg style="left:499.5px;top:250.5px" width="19" height="19" viewBox="0 0 16 16"><circle cx="8" cy="8" r="7.3" fill="#474747" stroke="#ddd" stroke-width="0.9"/><path d="M8 8 V0.7 A7.3 7.3 0 0 1 15.3 8Z" fill="#e0e0e0"/><path d="M8 8 V15.3 A7.3 7.3 0 0 1 0.7 8Z" fill="#e0e0e0"/></svg>
<svg style="left:499.5px;top:280.5px" width="19" height="19" viewBox="0 0 16 16"><path d="M1 15 L15 1" stroke="#ddd" stroke-width="1.2"/></svg>
<svg style="left:499.5px;top:310.5px" width="19" height="19" viewBox="0 0 16 16"><path d="M1 1 H15 V4 H9.5 V16 H6.5 V4 H1Z" fill="#e8e8e8"/></svg>
<svg style="left:499.5px;top:340.5px" width="19" height="19" viewBox="0 0 16 16"><path d="M3 2 L12 5 L8 7 L6 11Z" fill="#ddd"/><path d="M1 1 V15 H15 L14 3" fill="none" stroke="#ddd" stroke-width="1" stroke-dasharray="2 2"/></svg>
<svg style="left:499.5px;top:370.5px" width="19" height="19" viewBox="0 0 16 16"><rect x="1.5" y="1.5" width="13" height="13" fill="#e0e0e0"/></svg>
<svg style="left:499.5px;top:400.5px" width="19" height="19" viewBox="0 0 16 16"><circle cx="8" cy="8" r="7.5" fill="#e0e0e0"/></svg>
<svg style="left:499.5px;top:430.5px" width="19" height="19" viewBox="0 0 16 16"><path d="M8 0.5 L15.5 6 L13 15 H3 L0.5 6Z" fill="#e0e0e0"/></svg>
<svg style="left:499.5px;top:460.5px" width="19" height="19" viewBox="0 0 16 16"><path d="M8 0 L10.2 5.5 L16 5.8 L11.5 9.5 L13 15.5 L8 12 L3 15.5 L4.5 9.5 L0 5.8 L5.8 5.5Z" fill="#e0e0e0"/></svg>
<svg style="left:499.5px;top:490.5px" width="19" height="19" viewBox="0 0 16 16"><path d="M13.5 8 A5.5 5.5 0 1 0 8 13.5" fill="none" stroke="#e0e0e0" stroke-width="2.6"/></svg>
<svg style="left:499.5px;top:520.5px" width="19" height="19" viewBox="0 0 16 16"><path d="M8 0 C9 6 10 7 16 8 C10 9 9 10 8 16 C7 10 6 9 0 8 C6 7 7 6 8 0Z" fill="#e0e0e0"/></svg>
<svg style="left:499.5px;top:550.5px" width="19" height="19" viewBox="0 0 16 16"><path d="M8 0.5 L9.5 2.8 L12.2 2 L12.5 4.8 L15.2 5.6 L14 8 L15.2 10.4 L12.5 11.2 L12.2 14 L9.5 13.2 L8 15.5 L6.5 13.2 L3.8 14 L3.5 11.2 L0.8 10.4 L2 8 L0.8 5.6 L3.5 4.8 L3.8 2 L6.5 2.8Z" fill="#e0e0e0"/><circle cx="8" cy="8" r="2.8" fill="#474747"/></svg>
<svg style="left:502px;top:597px;" width="14" height="10" viewBox="0 0 14 10"><path d="M1 1 L5.5 5 L1 9 M7 1 L11.5 5 L7 9" fill="none" stroke="#aaa" stroke-width="1.1"/></svg>
<div class="a" style="left:524px;top:85px;width:6px;height:528px;background:#141414;"></div>
<div class="a" style="left:530px;top:85px;width:1057px;height:22px;background:#1e1e1e;"></div>
<div class="a" style="left:530px;top:85px;width:87px;height:22px;background:#474747;border-radius:4px 4px 0 0"></div>
<div class="t" style="left:535px;top:90.84px;font-size:12px;color:#e0e0e0;">Composition 1</div>
<div class="a" style="left:530px;top:107px;width:1057px;height:506px;background:#474747;"></div>
<div class="a" style="left:550px;top:127px;width:1037px;height:464px;background:#000;"></div>
<div class="a" style="left:677px;top:139px;width:782px;height:440px;background:#0c0c0c;"></div>
<div class="t" style="left:535px;top:112.11px;font-size:10.5px;color:#bbb;">px</div>
<svg style="left:551px;top:119px;" width="1036" height="8" viewBox="0 0 1036 8"><rect x="2.8" y="4" width="1" height="4" fill="#9a9a9a"/><rect x="15.1" y="4" width="1" height="4" fill="#9a9a9a"/><rect x="27.3" y="0" width="1" height="8" fill="#8a8a8a"/><rect x="39.5" y="4" width="1" height="4" fill="#9a9a9a"/><rect x="51.8" y="4" width="1" height="4" fill="#9a9a9a"/><rect x="64.0" y="4" width="1" height="4" fill="#9a9a9a"/><rect x="76.3" y="4" width="1" height="4" fill="#9a9a9a"/><rect x="88.5" y="0" width="1" height="8" fill="#8a8a8a"/><rect x="100.7" y="4" width="1" height="4" fill="#9a9a9a"/><rect x="113.0" y="4" width="1" height="4" fill="#9a9a9a"/><rect x="125.2" y="4" width="1" height="4" fill="#9a9a9a"/><rect x="137.5" y="4" width="1" height="4" fill="#9a9a9a"/><rect x="149.7" y="0" width="1" height="8" fill="#8a8a8a"/><rect x="161.9" y="4" width="1" height="4" fill="#9a9a9a"/><rect x="174.2" y="4" width="1" height="4" fill="#9a9a9a"/><rect x="186.4" y="4" width="1" height="4" fill="#9a9a9a"/><rect x="198.7" y="4" width="1" height="4" fill="#9a9a9a"/><rect x="210.9" y="0" width="1" height="8" fill="#8a8a8a"/><rect x="223.1" y="4" width="1" height="4" fill="#9a9a9a"/><rect x="235.4" y="4" width="1" height="4" fill="#9a9a9a"/><rect x="247.6" y="4" width="1" height="4" fill="#9a9a9a"/><rect x="259.9" y="4" width="1" height="4" fill="#9a9a9a"/><rect x="272.1" y="0" width="1" height="8" fill="#8a8a8a"/><rect x="284.3" y="4" width="1" height="4" fill="#9a9a9a"/><rect x="296.6" y="4" width="1" height="4" fill="#9a9a9a"/><rect x="308.8" y="4" width="1" height="4" fill="#9a9a9a"/><rect x="321.1" y="4" width="1" height="4" fill="#9a9a9a"/><rect x="333.3" y="0" width="1" height="8" fill="#8a8a8a"/><rect x="345.5" y="4" width="1" height="4" fill="#9a9a9a"/><rect x="357.8" y="4" width="1" height="4" fill="#9a9a9a"/><rect x="370.0" y="4" width="1" height="4" fill="#9a9a9a"/><rect x="382.3" y="4" width="1" height="4" fill="#9a9a9a"/><rect x="394.5" y="0" width="1" height="8" fill="#8a8a8a"/><rect x="406.7" y="4" width="1" height="4" fill="#9a9a9a"/><rect x="419.0" y="4" width="1" height="4" fill="#9a9a9a"/><rect x="431.2" y="4" width="1" height="4" fill="#9a9a9a"/><rect x="443.5" y="4" width="1" height="4" fill="#9a9a9a"/><rect x="455.7" y="0" width="1" height="8" fill="#8a8a8a"/><rect x="467.9" y="4" width="1" height="4" fill="#9a9a9a"/><rect x="480.2" y="4" width="1" height="4" fill="#9a9a9a"/><rect x="492.4" y="4" width="1" height="4" fill="#9a9a9a"/><rect x="504.7" y="4" width="1" height="4" fill="#9a9a9a"/><rect x="516.9" y="0" width="1" height="8" fill="#8a8a8a"/><rect x="529.1" y="4" width="1" height="4" fill="#9a9a9a"/><rect x="541.4" y="4" width="1" height="4" fill="#9a9a9a"/><rect x="553.6" y="4" width="1" height="4" fill="#9a9a9a"/><rect x="565.9" y="4" width="1" height="4" fill="#9a9a9a"/><rect x="578.1" y="0" width="1" height="8" fill="#8a8a8a"/><rect x="590.3" y="4" width="1" height="4" fill="#9a9a9a"/><rect x="602.6" y="4" width="1" height="4" fill="#9a9a9a"/><rect x="614.8" y="4" width="1" height="4" fill="#9a9a9a"/><rect x="627.1" y="4" width="1" height="4" fill="#9a9a9a"/><rect x="639.3" y="0" width="1" height="8" fill="#8a8a8a"/><rect x="651.5" y="4" width="1" height="4" fill="#9a9a9a"/><rect x="663.8" y="4" width="1" height="4" fill="#9a9a9a"/><rect x="676.0" y="4" width="1" height="4" fill="#9a9a9a"/><rect x="688.3" y="4" width="1" height="4" fill="#9a9a9a"/><rect x="700.5" y="0" width="1" height="8" fill="#8a8a8a"/><rect x="712.7" y="4" width="1" height="4" fill="#9a9a9a"/><rect x="725.0" y="4" width="1" height="4" fill="#9a9a9a"/><rect x="737.2" y="4" width="1" height="4" fill="#9a9a9a"/><rect x="749.5" y="4" width="1" height="4" fill="#9a9a9a"/><rect x="761.7" y="0" width="1" height="8" fill="#8a8a8a"/><rect x="773.9" y="4" width="1" height="4" fill="#9a9a9a"/><rect x="786.2" y="4" width="1" height="4" fill="#9a9a9a"/><rect x="798.4" y="4" width="1" height="4" fill="#9a9a9a"/><rect x="810.7" y="4" width="1" height="4" fill="#9a9a9a"/><rect x="822.9" y="0" width="1" height="8" fill="#8a8a8a"/><rect x="835.1" y="4" width="1" height="4" fill="#9a9a9a"/><rect x="847.4" y="4" width="1" height="4" fill="#9a9a9a"/><rect x="859.6" y="4" width="1" height="4" fill="#9a9a9a"/><rect x="871.9" y="4" width="1" height="4" fill="#9a9a9a"/><rect x="884.1" y="0" width="1" height="8" fill="#8a8a8a"/><rect x="896.3" y="4" width="1" height="4" fill="#9a9a9a"/><rect x="908.6" y="4" width="1" height="4" fill="#9a9a9a"/><rect x="920.8" y="4" width="1" height="4" fill="#9a9a9a"/><rect x="933.1" y="4" width="1" height="4" fill="#9a9a9a"/><rect x="945.3" y="0" width="1" height="8" fill="#8a8a8a"/><rect x="957.5" y="4" width="1" height="4" fill="#9a9a9a"/><rect x="969.8" y="4" width="1" height="4" fill="#9a9a9a"/><rect x="982.0" y="4" width="1" height="4" fill="#9a9a9a"/><rect x="994.3" y="4" width="1" height="4" fill="#9a9a9a"/><rect x="1006.5" y="0" width="1" height="8" fill="#8a8a8a"/><rect x="1018.7" y="4" width="1" height="4" fill="#9a9a9a"/><rect x="1031.0" y="4" width="1" height="4" fill="#9a9a9a"/></svg>
<div class="t" style="left:578.8000000000001px;top:109.11px;font-size:10.5px;color:#c8c8c8;transform:translateX(-50%);">-1200</div>
<div class="t" style="left:640.0px;top:109.11px;font-size:10.5px;color:#c8c8c8;transform:translateX(-50%);">-1050</div>
<div class="t" style="left:701.2px;top:109.11px;font-size:10.5px;color:#c8c8c8;transform:translateX(-50%);">-900</div>
<div class="t" style="left:762.4000000000001px;top:109.11px;font-size:10.5px;color:#c8c8c8;transform:translateX(-50%);">-750</div>
<div class="t" style="left:823.6000000000001px;top:109.11px;font-size:10.5px;color:#c8c8c8;transform:translateX(-50%);">-600</div>
<div class="t" style="left:884.8000000000001px;top:109.11px;font-size:10.5px;color:#c8c8c8;transform:translateX(-50%);">-450</div>
<div class="t" style="left:946.0000000000001px;top:109.11px;font-size:10.5px;color:#c8c8c8;transform:translateX(-50%);">-300</div>
<div class="t" style="left:1007.2px;top:109.11px;font-size:10.5px;color:#c8c8c8;transform:translateX(-50%);">-150</div>
<div class="t" style="left:1068.4px;top:109.11px;font-size:10.5px;color:#c8c8c8;transform:translateX(-50%);">0</div>
<div class="t" style="left:1129.6000000000001px;top:109.11px;font-size:10.5px;color:#c8c8c8;transform:translateX(-50%);">150</div>
<div class="t" style="left:1190.8000000000002px;top:109.11px;font-size:10.5px;color:#c8c8c8;transform:translateX(-50%);">300</div>
<div class="t" style="left:1252.0px;top:109.11px;font-size:10.5px;color:#c8c8c8;transform:translateX(-50%);">450</div>
<div class="t" style="left:1313.2px;top:109.11px;font-size:10.5px;color:#c8c8c8;transform:translateX(-50%);">600</div>
<div class="t" style="left:1374.4px;top:109.11px;font-size:10.5px;color:#c8c8c8;transform:translateX(-50%);">750</div>
<div class="t" style="left:1435.6000000000001px;top:109.11px;font-size:10.5px;color:#c8c8c8;transform:translateX(-50%);">900</div>
<div class="t" style="left:1496.8000000000002px;top:109.11px;font-size:10.5px;color:#c8c8c8;transform:translateX(-50%);">1050</div>
<div class="t" style="left:1558.0px;top:109.11px;font-size:10.5px;color:#c8c8c8;transform:translateX(-50%);">1200</div>
<svg style="left:542px;top:128px;" width="8" height="463" viewBox="0 0 8 463"><rect x="4" y="8.2" width="4" height="1" fill="#9a9a9a"/><rect x="4" y="20.4" width="4" height="1" fill="#9a9a9a"/><rect x="4" y="32.7" width="4" height="1" fill="#9a9a9a"/><rect x="0" y="44.9" width="8" height="1" fill="#8a8a8a"/><rect x="4" y="57.1" width="4" height="1" fill="#9a9a9a"/><rect x="4" y="69.4" width="4" height="1" fill="#9a9a9a"/><rect x="4" y="81.6" width="4" height="1" fill="#9a9a9a"/><rect x="4" y="93.9" width="4" height="1" fill="#9a9a9a"/><rect x="0" y="106.1" width="8" height="1" fill="#8a8a8a"/><rect x="4" y="118.3" width="4" height="1" fill="#9a9a9a"/><rect x="4" y="130.6" width="4" height="1" fill="#9a9a9a"/><rect x="4" y="142.8" width="4" height="1" fill="#9a9a9a"/><rect x="4" y="155.1" width="4" height="1" fill="#9a9a9a"/><rect x="0" y="167.3" width="8" height="1" fill="#8a8a8a"/><rect x="4" y="179.5" width="4" height="1" fill="#9a9a9a"/><rect x="4" y="191.8" width="4" height="1" fill="#9a9a9a"/><rect x="4" y="204.0" width="4" height="1" fill="#9a9a9a"/><rect x="4" y="216.3" width="4" height="1" fill="#9a9a9a"/><rect x="0" y="228.5" width="8" height="1" fill="#8a8a8a"/><rect x="4" y="240.7" width="4" height="1" fill="#9a9a9a"/><rect x="4" y="253.0" width="4" height="1" fill="#9a9a9a"/><rect x="4" y="265.2" width="4" height="1" fill="#9a9a9a"/><rect x="4" y="277.5" width="4" height="1" fill="#9a9a9a"/><rect x="0" y="289.7" width="8" height="1" fill="#8a8a8a"/><rect x="4" y="301.9" width="4" height="1" fill="#9a9a9a"/><rect x="4" y="314.2" width="4" height="1" fill="#9a9a9a"/><rect x="4" y="326.4" width="4" height="1" fill="#9a9a9a"/><rect x="4" y="338.7" width="4" height="1" fill="#9a9a9a"/><rect x="0" y="350.9" width="8" height="1" fill="#8a8a8a"/><rect x="4" y="363.1" width="4" height="1" fill="#9a9a9a"/><rect x="4" y="375.4" width="4" height="1" fill="#9a9a9a"/><rect x="4" y="387.6" width="4" height="1" fill="#9a9a9a"/><rect x="4" y="399.9" width="4" height="1" fill="#9a9a9a"/><rect x="0" y="412.1" width="8" height="1" fill="#8a8a8a"/><rect x="4" y="424.3" width="4" height="1" fill="#9a9a9a"/><rect x="4" y="436.6" width="4" height="1" fill="#9a9a9a"/><rect x="4" y="448.8" width="4" height="1" fill="#9a9a9a"/><rect x="4" y="461.1" width="4" height="1" fill="#9a9a9a"/></svg>
<div class="t" style="left:537px;top:173.4px;font-size:10.5px;color:#c8c8c8;transform:translate(-50%,-50%) rotate(-90deg);transform-origin:center">450</div>
<div class="t" style="left:537px;top:234.6px;font-size:10.5px;color:#c8c8c8;transform:translate(-50%,-50%) rotate(-90deg);transform-origin:center">300</div>
<div class="t" style="left:537px;top:295.8px;font-size:10.5px;color:#c8c8c8;transform:translate(-50%,-50%) rotate(-90deg);transform-origin:center">150</div>
<div class="t" style="left:537px;top:357.0px;font-size:10.5px;color:#c8c8c8;transform:translate(-50%,-50%) rotate(-90deg);transform-origin:center">0</div>
<div class="t" style="left:537px;top:418.2px;font-size:10.5px;color:#c8c8c8;transform:translate(-50%,-50%) rotate(-90deg);transform-origin:center">-150</div>
<div class="t" style="left:537px;top:479.4px;font-size:10.5px;color:#c8c8c8;transform:translate(-50%,-50%) rotate(-90deg);transform-origin:center">-300</div>
<div class="t" style="left:537px;top:540.6px;font-size:10.5px;color:#c8c8c8;transform:translate(-50%,-50%) rotate(-90deg);transform-origin:center">-450</div>
<div class="a" style="left:1005px;top:347px;width:130px;height:48px;background:transparent;border:3px solid #b9e51c"></div>
<div class="t" style="left:1020px;top:362.88px;font-size:15.5px;color:#f0f0f0;">Tokyo - Japan</div>
<div class="t" style="left:569px;top:495.01px;font-size:11.8px;color:#f0f0f0;transform:scaleX(0.9862);transform-origin:left">Hold S <span style="color:#5a5a5a">Direct Layer Selection</span></div>
<div class="t" style="left:569px;top:509.01px;font-size:11.8px;color:#f0f0f0;transform:scaleX(0.9611);transform-origin:left">Space <span style="color:#5a5a5a">Play/ Stop</span></div>
<div class="t" style="left:569px;top:523.01px;font-size:11.8px;color:#f0f0f0;transform:scaleX(0.9482);transform-origin:left">Space + click + drag <span style="color:#5a5a5a">Pan</span></div>
<div class="t" style="left:569px;top:537.01px;font-size:11.8px;color:#f0f0f0;transform:scaleX(1.0053);transform-origin:left">Alt + click + drag <span style="color:#5a5a5a">Move Pivot Point</span></div>
<div class="t" style="left:569px;top:551.01px;font-size:11.8px;color:#f0f0f0;transform:scaleX(0.9762);transform-origin:left">Shift <span style="color:#5a5a5a">Enable Snapping</span></div>
<div class="t" style="left:569px;top:571.01px;font-size:11.8px;color:#f0f0f0;">00:00:00:00</div>
<div class="t" style="left:998px;top:571.01px;font-size:11.8px;color:#f0f0f0;">Viewport Quality: High</div>
<div class="a" style="left:533px;top:594px;width:79px;height:16px;background:#262626;border-radius:3px"></div>
<div class="t" style="left:538px;top:597.27px;font-size:11.5px;color:#dcdcdc;">41%</div>
<svg style="left:599px;top:599px;" width="9" height="6" viewBox="0 0 9 6"><path d="M0.5 0.5 L4.5 4.5 L8.5 0.5" fill="none" stroke="#ccc" stroke-width="1"/></svg>
<div class="a" style="left:867px;top:593px;width:99px;height:19px;background:#2b2b2b;border:1px solid #222;border-radius:4px;box-shadow:inset 0 1px 0 rgba(255,255,255,0.12)"></div>
<div class="a" style="left:886px;top:594px;width:1px;height:17px;background:#222;"></div>
<div class="a" style="left:906px;top:594px;width:1px;height:17px;background:#222;"></div>
<div class="a" style="left:926px;top:594px;width:1px;height:17px;background:#222;"></div>
<div class="a" style="left:946px;top:594px;width:1px;height:17px;background:#222;"></div>
<svg style="left:872px;top:597px;" width="10" height="10" viewBox="0 0 10 10"><rect x="0" y="0" width="2" height="10" fill="#ccc"/><path d="M3 5 L10 0 V10Z" fill="#ccc"/></svg>
<svg style="left:892px;top:597px;" width="10" height="10" viewBox="0 0 10 10"><path d="M0 5 L7 0 V10Z" fill="#ccc"/><rect x="8" y="0" width="2" height="10" fill="#ccc"/></svg>
<svg style="left:912px;top:597px;" width="10" height="10" viewBox="0 0 10 10"><path d="M1 0 L10 5 L1 10Z" fill="#ccc"/></svg>
<svg style="left:932px;top:597px;" width="10" height="10" viewBox="0 0 10 10"><rect x="0" y="0" width="2" height="10" fill="#ccc"/><path d="M3 0 L10 5 L3 10Z" fill="#ccc"/></svg>
<svg style="left:952px;top:597px;" width="10" height="10" viewBox="0 0 10 10"><path d="M0 0 L7 5 L0 10Z" fill="#ccc"/><rect x="8" y="0" width="2" height="10" fill="#ccc"/></svg>
<div class="a" style="left:971px;top:593px;width:20px;height:19px;background:#2b2b2b;border:1px solid #222;border-radius:4px;box-shadow:inset 0 1px 0 rgba(255,255,255,0.12)"></div>
<svg style="left:974px;top:596px;" width="14" height="11" viewBox="0 0 14 11"><path d="M5 3 H1 V10 H13 V5" fill="none" stroke="#ccc" stroke-width="1.2"/><path d="M8 0 L13 2.5 L8 5Z" fill="#ccc"/></svg>
<div class="a" style="left:1232px;top:593px;width:37px;height:17px;background:#2b2b2b;border-radius:3px"></div>
<svg style="left:1233px;top:597px;" width="14" height="8" viewBox="0 0 14 8"><path d="M0 4 L4 0 H14 V8 H4Z" fill="#ddd"/><circle cx="5" cy="4" r="1.5" fill="#333"/></svg>
<div class="t" style="left:1258px;top:596.84px;font-size:12px;color:#777;">0</div>
<div class="a" style="left:1272px;top:593px;width:31px;height:19px;background:#2b2b2b;border:1px solid #222;border-radius:4px"></div>
<div class="a" style="left:1291px;top:594px;width:1px;height:17px;background:#222;"></div>
<svg style="left:1294px;top:598px;" width="7" height="9" viewBox="0 0 7 9"><path d="M0.5 0.5 L6 4.5 L0.5 8.5Z" fill="none" stroke="#aaa" stroke-width="1"/></svg>
<svg style="left:1275px;top:596px;" width="14" height="13" viewBox="0 0 14 13"><path d="M0 4 H3 L7 0.5 V12.5 L3 9 H0Z" fill="#2ecc71"/><path d="M9 3 Q11 6.5 9 10 M11 1 Q14 6.5 11 12" fill="none" stroke="#2ecc71" stroke-width="1.3"/></svg>
<div class="a" style="left:1307px;top:593px;width:31px;height:19px;background:#2b2b2b;border:1px solid #222;border-radius:4px"></div>
<div class="a" style="left:1326px;top:594px;width:1px;height:17px;background:#222;"></div>
<svg style="left:1329px;top:598px;" width="7" height="9" viewBox="0 0 7 9"><path d="M0.5 0.5 L6 4.5 L0.5 8.5Z" fill="none" stroke="#aaa" stroke-width="1"/></svg>
<div class="a" style="left:1308px;top:594px;width:18px;height:17px;background:#3e3e3e;border-radius:3px 0 0 3px"></div>
<svg style="left:1310px;top:596px;" width="12" height="12" viewBox="0 0 12 12"><path d="M2.5 5 A4 4 0 0 1 10.5 5 L10 8" fill="none" stroke="#ccc" stroke-width="2"/><path d="M2.5 5 L6 11" stroke="#ccc" stroke-width="2"/></svg>
<div class="a" style="left:1342px;top:593px;width:31px;height:19px;background:#2b2b2b;border:1px solid #222;border-radius:4px"></div>
<div class="a" style="left:1361px;top:594px;width:1px;height:17px;background:#222;"></div>
<svg style="left:1364px;top:598px;" width="7" height="9" viewBox="0 0 7 9"><path d="M0.5 0.5 L6 4.5 L0.5 8.5Z" fill="none" stroke="#aaa" stroke-width="1"/></svg>
<div class="a" style="left:1343px;top:594px;width:18px;height:17px;background:#3e3e3e;border-radius:3px 0 0 3px"></div>
<svg style="left:1344px;top:596px;" width="15" height="14" viewBox="0 0 15 14"><path d="M4.5 0 V14 M10.5 0 V14 M0 4.5 H15 M0 9.5 H15" stroke="#ddd" stroke-width="1"/></svg>
<div class="a" style="left:1377px;top:593px;width:21px;height:19px;background:#2b2b2b;border:1px solid #222;border-radius:4px"></div>
<svg style="left:1379px;top:596px;" width="16" height="13" viewBox="0 0 16 13"><rect x="0" y="0" width="4" height="3" fill="#2ecc71"/><rect x="0" y="4" width="4" height="9" fill="#2ecc71"/><rect x="5.5" y="0.5" width="10" height="7" fill="none" stroke="#2ecc71" stroke-width="1.2"/><rect x="5" y="9" width="11" height="4" fill="#2ecc71"/></svg>
<div class="a" style="left:1400px;top:593px;width:20px;height:19px;background:#2b2b2b;border:1px solid #222;border-radius:4px"></div>
<svg style="left:1403px;top:597px;" width="14" height="10" viewBox="0 0 14 10"><path d="M0 0 L5 5 L0 10Z M5 0 L10 5 L5 10 L6.5 5Z M9 0 L14 5 L9 10 L10.5 5Z" fill="#ccc"/></svg>
<div class="a" style="left:1423px;top:593px;width:31px;height:19px;background:#2b2b2b;border:1px solid #222;border-radius:4px"></div>
<div class="a" style="left:1442px;top:594px;width:1px;height:17px;background:#222;"></div>
<svg style="left:1445px;top:598px;" width="7" height="9" viewBox="0 0 7 9"><path d="M0.5 0.5 L6 4.5 L0.5 8.5Z" fill="none" stroke="#aaa" stroke-width="1"/></svg>
<div class="a" style="left:1424px;top:594px;width:18px;height:17px;background:#3e3e3e;border-radius:3px 0 0 3px"></div>
<svg style="left:1426px;top:596px;" width="14" height="12" viewBox="0 0 14 12"><rect x="0.7" y="0.7" width="12.6" height="9" fill="none" stroke="#ddd" stroke-width="1.3"/><rect x="0" y="9.5" width="14" height="2" fill="#ddd"/></svg>
<div class="a" style="left:1458px;top:593px;width:31px;height:19px;background:#2b2b2b;border:1px solid #222;border-radius:4px"></div>
<div class="a" style="left:1477px;top:594px;width:1px;height:17px;background:#222;"></div>
<svg style="left:1480px;top:598px;" width="7" height="9" viewBox="0 0 7 9"><path d="M0.5 0.5 L6 4.5 L0.5 8.5Z" fill="none" stroke="#aaa" stroke-width="1"/></svg>
<div class="a" style="left:1459px;top:594px;width:18px;height:17px;background:#3e3e3e;border-radius:3px 0 0 3px"></div>
<svg style="left:1461px;top:596px;" width="14" height="13" viewBox="0 0 14 13"><rect x="0.5" y="0.5" width="7" height="5" fill="none" stroke="#ddd"/><path d="M2 7 H9 V2 M4 9.5 H11.5 V4 M6 12 H14 V6" fill="none" stroke="#aaa" stroke-width="0.9"/></svg>
<div class="a" style="left:1493px;top:593px;width:31px;height:19px;background:#2b2b2b;border:1px solid #222;border-radius:4px"></div>
<div class="a" style="left:1512px;top:594px;width:1px;height:17px;background:#222;"></div>
<svg style="left:1515px;top:598px;" width="7" height="9" viewBox="0 0 7 9"><path d="M0.5 0.5 L6 4.5 L0.5 8.5Z" fill="none" stroke="#aaa" stroke-width="1"/></svg>
<div class="a" style="left:1494px;top:594px;width:18px;height:17px;background:#3e3e3e;border-radius:3px 0 0 3px"></div>
<svg style="left:1496px;top:596px;" width="14" height="14" viewBox="0 0 14 14"><rect x="0" y="0" width="9" height="9" fill="#ccc"/><rect x="5" y="5" width="9" height="9" fill="#3e3e3e" stroke="#ddd" stroke-width="1.2"/></svg>
<div class="a" style="left:1528px;top:593px;width:31px;height:19px;background:#2b2b2b;border:1px solid #222;border-radius:4px"></div>
<div class="a" style="left:1547px;top:594px;width:1px;height:17px;background:#222;"></div>
<svg style="left:1550px;top:598px;" width="7" height="9" viewBox="0 0 7 9"><path d="M0.5 0.5 L6 4.5 L0.5 8.5Z" fill="none" stroke="#aaa" stroke-width="1"/></svg>
<svg style="left:1531px;top:597px;" width="12" height="12" viewBox="0 0 12 12"><rect x="0.0" y="0.0" width="2.5" height="2.5" fill="#2ecc71"/><rect x="0.0" y="5.0" width="2.5" height="2.5" fill="#2ecc71"/><rect x="0.0" y="10.0" width="2.5" height="2.5" fill="#2ecc71"/><rect x="2.5" y="2.5" width="2.5" height="2.5" fill="#2ecc71"/><rect x="2.5" y="7.5" width="2.5" height="2.5" fill="#2ecc71"/><rect x="5.0" y="0.0" width="2.5" height="2.5" fill="#2ecc71"/><rect x="5.0" y="5.0" width="2.5" height="2.5" fill="#2ecc71"/><rect x="5.0" y="10.0" width="2.5" height="2.5" fill="#2ecc71"/><rect x="7.5" y="2.5" width="2.5" height="2.5" fill="#2ecc71"/><rect x="7.5" y="7.5" width="2.5" height="2.5" fill="#2ecc71"/><rect x="10.0" y="0.0" width="2.5" height="2.5" fill="#2ecc71"/><rect x="10.0" y="5.0" width="2.5" height="2.5" fill="#2ecc71"/><rect x="10.0" y="10.0" width="2.5" height="2.5" fill="#2ecc71"/></svg>
<div class="a" style="left:1563px;top:593px;width:20px;height:19px;background:#2b2b2b;border:1px solid #222;border-radius:4px"></div>
<svg style="left:1566px;top:596px;" width="14" height="14" viewBox="0 0 14 14"><path d="M7 0.5 L8.3 2.4 L10.6 1.8 L10.9 4.1 L13.2 4.8 L12.2 7 L13.2 9.2 L10.9 9.9 L10.6 12.2 L8.3 11.6 L7 13.5 L5.7 11.6 L3.4 12.2 L3.1 9.9 L0.8 9.2 L1.8 7 L0.8 4.8 L3.1 4.1 L3.4 1.8 L5.7 2.4Z" fill="#ddd"/><circle cx="7" cy="7" r="2.5" fill="#2b2b2b"/></svg>
<div class="a" style="left:1587px;top:85px;width:6px;height:528px;background:#141414;"></div>
<div class="a" style="left:1593px;top:85px;width:327px;height:22px;background:#1e1e1e;"></div>
<div class="a" style="left:1593px;top:85px;width:40px;height:22px;background:#474747;border-radius:4px 4px 0 0"></div>
<div class="a" style="left:1634px;top:85px;width:68px;height:22px;background:#242424;border-radius:4px 4px 0 0"></div>
<div class="t" style="left:1598px;top:90.84px;font-size:12px;color:#e0e0e0;">Color</div>
<div class="t" style="left:1640px;top:90.84px;font-size:12px;color:#e6e6e6;">Add Layers</div>
<div class="a" style="left:1593px;top:107px;width:321px;height:410px;background:#474747;"></div>
<div class="a" style="left:1900px;top:107px;width:14px;height:410px;background:#3e3e3e;"></div>
<div class="a" style="left:1902px;top:108px;width:10px;height:355px;background:#555;border-radius:5px"></div>
<div class="a" style="left:1914px;top:85px;width:6px;height:944px;background:#1e1e1e;"></div>
<div class="a" style="left:1645.5px;top:119.69999999999999px;width:200px;height:200px;border-radius:50%;background:conic-gradient(from 90deg, #f00 0deg, #f0f 60deg, #00f 120deg, #0ff 180deg, #0f0 240deg, #ff0 300deg, #f00 360deg);-webkit-mask:radial-gradient(circle, transparent 74px, #000 75px);mask:radial-gradient(circle, transparent 74px, #000 75px)"></div>
<div class="a" style="left:1702px;top:176px;width:90px;height:90px;background:linear-gradient(to right,#000,rgba(0,0,0,0)),linear-gradient(to bottom,#fff,#f00)"></div>
<svg style="left:1745px;top:176px;" width="1" height="1" viewBox="0 0 1 1"><circle cx="0" cy="0" r="6" fill="none" stroke="#ddd" stroke-width="1.3"/></svg>
<svg style="left:1833px;top:220px;" width="1" height="1" viewBox="0 0 1 1"><circle cx="0" cy="0" r="6" fill="none" stroke="#eee" stroke-width="1.3"/></svg>
<div class="a" style="left:1600px;top:333px;width:22px;height:22px;background:#7a7a7a;border-radius:3px"></div>
<div class="t" style="left:1625px;top:338.84px;font-size:12px;color:#e0e0e0;">Gray</div>
<div class="a" style="left:1871px;top:333px;width:22px;height:22px;background:#2b2b2b;border:1px solid #222;border-radius:4px"></div>
<svg style="left:1876px;top:338px;" width="12" height="12" viewBox="0 0 12 12"><path d="M1 11 L7 5" stroke="#bbb" stroke-width="2.2"/><path d="M1.5 10.5 L6.5 5.5" stroke="#2b2b2b" stroke-width="0.9"/><path d="M6 3 L9 6 L11 4 L10 3 L11 1 L9.5 0.5 L8 2Z" fill="#ddd"/></svg>
<div class="a" style="left:1600px;top:361px;width:50px;height:17px;background:#3c3c3c;border:1px solid #2e2e2e;border-radius:3px"></div>
<div class="t" style="left:1603px;top:364.84px;font-size:12px;color:#e0e0e0;">Hex</div>
<svg style="left:1636px;top:367px;" width="9" height="6" viewBox="0 0 9 6"><path d="M0.5 0.5 L4.5 4.5 L8.5 0.5" fill="none" stroke="#ccc" stroke-width="1"/></svg>
<div class="a" style="left:1653px;top:358px;width:240px;height:22px;background:#262626;border-radius:3px"></div>
<div class="t" style="left:1660px;top:365.54px;font-size:10px;color:#555;">#</div>
<div class="t" style="left:1670px;top:363.84px;font-size:12px;color:#e0e0e0;">7a7a7a</div>
<div class="a" style="left:1600px;top:391px;width:236px;height:3px;background:#e6e6e6;border-radius:2px"></div>
<svg style="left:1834px;top:392px;" width="1" height="1" viewBox="0 0 1 1"><circle cx="0" cy="0" r="5" fill="#6cc9a5" stroke="#4a9a7a" stroke-width="1"/></svg>
<div class="a" style="left:1849px;top:384px;width:44px;height:17px;background:#262626;border-radius:3px"></div>
<div class="t" style="left:1853px;top:387.69px;font-size:11px;color:#555;">A</div>
<div class="t" style="left:1866px;top:386.84px;font-size:12px;color:#e0e0e0;">255</div>
<div class="a" style="left:1597px;top:406px;width:300px;height:24px;background:#1e1e1e;"></div>
<div class="a" style="left:1599px;top:408px;width:147px;height:21px;background:#474747;border-radius:4px 4px 0 0"></div>
<div class="a" style="left:1747px;top:408px;width:148px;height:21px;background:#2b2b2b;"></div>
<div class="t" style="left:1673px;top:411.84px;font-size:12px;color:#e6e6e6;transform:translateX(-50%);">Swatches</div>
<div class="t" style="left:1820px;top:411.84px;font-size:12px;color:#c8c8c8;transform:translateX(-50%);">Generator</div>
<div class="a" style="left:1598px;top:430px;width:264px;height:19px;background:#5a5a5a;border-radius:3px"></div>
<div class="a" style="left:1600px;top:432px;width:61px;height:15px;background:#262626;border-radius:3px"></div>
<svg style="left:1605px;top:435px;" width="13" height="10" viewBox="0 0 13 10"><rect x="0" y="0" width="1.6" height="10" fill="#2ecc71"/><rect x="3" y="0" width="1.6" height="10" fill="#2ecc71"/><path d="M6 0 L10.5 10" stroke="#2ecc71" stroke-width="1.6"/></svg>
<div class="t" style="left:1621px;top:434.84px;font-size:12px;color:#e6e6e6;">Library</div>
<svg style="left:1670px;top:435px;" width="11" height="10" viewBox="0 0 11 10"><path d="M0 1 H4 L5 2 H11 V10 H0Z" fill="#ccc"/><rect x="2" y="4" width="7" height="1" fill="#555"/><rect x="2" y="6" width="7" height="1" fill="#555"/></svg>
<div class="t" style="left:1686px;top:434.84px;font-size:12px;color:#e6e6e6;">Project</div>
<svg style="left:1738px;top:434px;" width="9" height="11" viewBox="0 0 9 11"><path d="M0.5 0.5 H5.5 L8.5 3.5 V10.5 H0.5Z" fill="none" stroke="#ccc" stroke-width="1"/></svg>
<div class="t" style="left:1752px;top:434.84px;font-size:12px;color:#e6e6e6;">Scene</div>
<svg style="left:1800px;top:434px;" width="11" height="11" viewBox="0 0 11 11"><path d="M1 5 L5 1 H10 V6 L5.5 10.5 Z" fill="none" stroke="#ccc" stroke-width="1.1"/></svg>
<div class="t" style="left:1816px;top:434.84px;font-size:12px;color:#e6e6e6;">Labels</div>
<div class="a" style="left:1857px;top:430px;width:38px;height:19px;background:#5a5a5a;border-radius:3px"></div>
<div class="a" style="left:1858px;top:432px;width:19px;height:15px;background:#262626;border-radius:3px"></div>
<svg style="left:1863px;top:435px;" width="9" height="9" viewBox="0 0 9 9"><rect x="0" y="0" width="3.5" height="3.5" fill="#2ecc71"/><rect x="5.5" y="0" width="3.5" height="3.5" fill="#2ecc71"/><rect x="0" y="5.5" width="3.5" height="3.5" fill="#2ecc71"/><rect x="5.5" y="5.5" width="3.5" height="3.5" fill="#2ecc71"/></svg>
<svg style="left:1881px;top:435px;" width="11" height="9" viewBox="0 0 11 9"><path d="M0 0.5 H11 M0 4.5 H11 M0 8.5 H11" stroke="#ccc" stroke-width="1.1"/></svg>
<div class="a" style="left:1598px;top:453px;width:275px;height:17px;background:#555;border:1px solid #3e3e3e;border-radius:3px"></div>
<div class="t" style="left:1601px;top:456.84px;font-size:12px;color:#e6e6e6;">Simple</div>
<svg style="left:1860px;top:459px;" width="9" height="6" viewBox="0 0 9 6"><path d="M0.5 0.5 L4.5 4.5 L8.5 0.5" fill="none" stroke="#ccc" stroke-width="1"/></svg>
<div class="a" style="left:1880px;top:461px;width:2px;height:2px;background:#ccc;border-radius:1px"></div>
<div class="a" style="left:1885px;top:461px;width:2px;height:2px;background:#ccc;border-radius:1px"></div>
<div class="a" style="left:1890px;top:461px;width:2px;height:2px;background:#ccc;border-radius:1px"></div>
<div class="a" style="left:1598px;top:470px;width:297px;height:47px;background:#2b2b2b;"></div>
<div class="a" style="left:1600px;top:472px;width:18px;height:18px;background:#1a76c4;border-radius:3px"></div>
<div class="a" style="left:1622px;top:472px;width:18px;height:18px;background:#1a9fe0;border-radius:3px"></div>
<div class="a" style="left:1644px;top:472px;width:18px;height:18px;background:#8dc163;border-radius:3px"></div>
<div class="a" style="left:1666px;top:472px;width:18px;height:18px;background:#f2e340;border-radius:3px"></div>
<div class="a" style="left:1688px;top:472px;width:18px;height:18px;background:#f07512;border-radius:3px"></div>
<div class="a" style="left:1593px;top:517px;width:321px;height:6px;background:#141414;"></div>
<div class="a" style="left:1593px;top:523px;width:321px;height:22px;background:#1e1e1e;"></div>
<div class="a" style="left:1593px;top:523px;width:38px;height:22px;background:#474747;border-radius:4px 4px 0 0"></div>
<div class="t" style="left:1598px;top:529.84px;font-size:12px;color:#e0e0e0;">Align</div>
<div class="a" style="left:1593px;top:545px;width:321px;height:68px;background:#474747;"></div>
<div class="t" style="left:1601px;top:558.84px;font-size:12px;color:#e0e0e0;">Alignment</div>
<div class="t" style="left:1601px;top:586.84px;font-size:12px;color:#e0e0e0;">Distribution</div>
<div class="a" style="left:1791px;top:556px;width:53px;height:17px;background:#262626;border:1px solid #1e1e1e;border-radius:4px"></div>
<div class="a" style="left:1808px;top:557px;width:1px;height:15px;background:#444;"></div>
<div class="a" style="left:1826px;top:557px;width:1px;height:15px;background:#444;"></div>
<svg style="left:1794px;top:559px;" width="11" height="11" viewBox="0 0 11 11"><rect x="0" y="0" width="1.2" height="11" fill="#ddd"/><rect x="2.5" y="2.5" width="5" height="2" fill="#ddd"/><rect x="2.5" y="6.5" width="8" height="2" fill="#ddd"/></svg>
<svg style="left:1812px;top:559px;" width="11" height="11" viewBox="0 0 11 11"><rect x="5" y="0" width="1.2" height="11" fill="#ddd"/><rect x="2.5" y="2.5" width="6" height="2" fill="#ddd"/><rect x="1" y="6.5" width="9" height="2" fill="#ddd"/></svg>
<svg style="left:1830px;top:559px;" width="11" height="11" viewBox="0 0 11 11"><rect x="9.8" y="0" width="1.2" height="11" fill="#ddd"/><rect x="3.5" y="2.5" width="5" height="2" fill="#ddd"/><rect x="0.5" y="6.5" width="8" height="2" fill="#ddd"/></svg>
<div class="a" style="left:1852px;top:556px;width:53px;height:17px;background:#262626;border:1px solid #1e1e1e;border-radius:4px"></div>
<div class="a" style="left:1869px;top:557px;width:1px;height:15px;background:#444;"></div>
<div class="a" style="left:1887px;top:557px;width:1px;height:15px;background:#444;"></div>
<svg style="left:1855px;top:559px;" width="11" height="11" viewBox="0 0 11 11"><rect x="0" y="0" width="11" height="1.2" fill="#ddd"/><rect x="2.5" y="2.5" width="2" height="8" fill="#ddd"/><rect x="6.5" y="2.5" width="2" height="5" fill="#ddd"/></svg>
<svg style="left:1873px;top:559px;" width="11" height="11" viewBox="0 0 11 11"><rect x="0" y="5" width="11" height="1.2" fill="#ddd"/><rect x="2.5" y="1" width="2" height="9" fill="#ddd"/><rect x="6.5" y="2.5" width="2" height="6" fill="#ddd"/></svg>
<svg style="left:1891px;top:559px;" width="11" height="11" viewBox="0 0 11 11"><rect x="0" y="9.8" width="11" height="1.2" fill="#ddd"/><rect x="2.5" y="0.5" width="2" height="8" fill="#ddd"/><rect x="6.5" y="3.5" width="2" height="5" fill="#ddd"/></svg>
<div class="a" style="left:1791px;top:584px;width:53px;height:17px;background:#262626;border:1px solid #1e1e1e;border-radius:4px"></div>
<div class="a" style="left:1808px;top:585px;width:1px;height:15px;background:#444;"></div>
<div class="a" style="left:1826px;top:585px;width:1px;height:15px;background:#444;"></div>
<svg style="left:1794px;top:587px;" width="11" height="11" viewBox="0 0 11 11"><rect x="0" y="0" width="1.2" height="11" fill="#ddd"/><rect x="4.5" y="1.5" width="2" height="8" fill="#ddd"/><rect x="9.8" y="0" width="1.2" height="11" fill="#ddd"/></svg>
<svg style="left:1812px;top:587px;" width="11" height="11" viewBox="0 0 11 11"><rect x="0" y="0" width="11" height="1.2" fill="#ddd"/><rect x="1.5" y="4.5" width="8" height="2" fill="#ddd"/><rect x="0" y="9.8" width="11" height="1.2" fill="#ddd"/></svg>
<svg style="left:1830px;top:587px;" width="11" height="11" viewBox="0 0 11 11"><path d="M0 10 V6 M3 10 V4 M6 8 V3 M9 6 V1" stroke="#ddd" stroke-width="1.6" stroke-dasharray="2 1"/></svg>
<div class="a" style="left:1593px;top:613px;width:327px;height:6px;background:#141414;"></div>
<div class="a" style="left:494px;top:619px;width:1420px;height:22px;background:#1e1e1e;"></div>
<div class="a" style="left:494px;top:619px;width:89px;height:22px;background:#474747;border-radius:4px 4px 0 0"></div>
<div class="a" style="left:584px;top:619px;width:100px;height:22px;background:#242424;border-radius:4px 4px 0 0"></div>
<div class="a" style="left:685px;top:619px;width:112px;height:22px;background:#242424;border-radius:4px 4px 0 0"></div>
<div class="t" style="left:500px;top:624.84px;font-size:12px;color:#e6e6e6;">Scene Window</div>
<div class="t" style="left:590px;top:624.84px;font-size:12px;color:#e6e6e6;">JavaScript Editor</div>
<div class="t" style="left:690px;top:624.84px;font-size:12px;color:#e6e6e6;">Dependency Graph</div>
<div class="a" style="left:494px;top:641px;width:1420px;height:2px;background:#2a2a2a;"></div>
<div class="a" style="left:494px;top:643px;width:506px;height:20px;background:#474747;"></div>
<div class="a" style="left:494px;top:643px;width:5px;height:20px;background:#2e2e2e;"></div>
<div class="a" style="left:499px;top:643px;width:501px;height:20px;background:#474747;border-radius:5px 0 0 0"></div>
<div class="a" style="left:494px;top:663px;width:506px;height:42px;background:#424242;"></div>
<div class="a" style="left:497px;top:665px;width:295px;height:20px;background:#262626;border-radius:10px"></div>
<svg style="left:501px;top:668px;" width="14" height="14" viewBox="0 0 14 14"><circle cx="5.5" cy="5.5" r="4.3" fill="none" stroke="#ddd" stroke-width="1.1"/><path d="M8.5 8.5 L12 12" stroke="#ddd" stroke-width="1.8"/></svg>
<div class="t" style="left:520px;top:670.01px;font-size:11.8px;color:#8c8c8c;">Enter a layer name</div>
<div class="a" style="left:795px;top:665px;width:19px;height:20px;background:#2b2b2b;border:1px solid #1e1e1e;border-radius:4px;box-shadow:inset 0 1px 0 rgba(255,255,255,0.18)"></div>
<svg style="left:799px;top:669px;" width="12" height="14" viewBox="0 0 12 14"><path d="M5 0.7 V10.7 M0 5.7 H10" stroke="#e6e6e6" stroke-width="1.8"/><path d="M9.5 13 L12.5 10 V13Z" fill="#6cc9a5"/></svg>
<div class="a" style="left:838px;top:665px;width:20px;height:20px;background:#2b2b2b;border:1px solid #1e1e1e;border-radius:4px;box-shadow:inset 0 1px 0 rgba(255,255,255,0.18)"></div>
<div class="a" style="left:860px;top:665px;width:20px;height:20px;background:#2b2b2b;border:1px solid #1e1e1e;border-radius:4px;box-shadow:inset 0 1px 0 rgba(255,255,255,0.18)"></div>
<div class="a" style="left:882px;top:665px;width:20px;height:20px;background:#2b2b2b;border:1px solid #1e1e1e;border-radius:4px;box-shadow:inset 0 1px 0 rgba(255,255,255,0.18)"></div>
<svg style="left:842px;top:669px;" width="14" height="14" viewBox="0 0 14 14"><path d="M2.5 12.5 A4.5 4.5 0 0 1 4 6" fill="none" stroke="#555" stroke-width="1"/><path d="M4.3 10.5 A4.5 4.5 0 0 1 6 4.2" fill="none" stroke="#777" stroke-width="1"/><path d="M6.3 8.5 A4.3 4.3 0 0 1 7.8 2.6" fill="none" stroke="#999" stroke-width="1"/><circle cx="9.1" cy="2.9" r="4.1" fill="#ddd"/></svg>
<svg style="left:864px;top:669px;" width="14" height="14" viewBox="0 0 14 14"><circle cx="2" cy="1" r="1.1" fill="#ccc"/><circle cx="9.1" cy="1.8" r="1.1" fill="#ccc"/><circle cx="1.9" cy="7.8" r="1.1" fill="#ccc"/><path d="M7.7 5.5 L8.6 8.1 L11.2 9 L8.6 9.9 L7.7 12.5 L6.8 9.9 L4.2 9 L6.8 8.1Z" fill="#e6e6e6"/><path d="M10.3 13.5 L13.3 10.5 V13.5Z" fill="#6cc9a5"/></svg>
<svg style="left:886px;top:669px;" width="14" height="14" viewBox="0 0 14 14"><path d="M-1 0.5 H1 M7 0.5 H13.2 M-1 5.4 H6 M10.2 5.4 H13.2 M-1 10.4 H1 M6 10.4 H10" stroke="#ccc" stroke-width="1.1"/><circle cx="4" cy="0.5" r="1.9" fill="none" stroke="#ccc" stroke-width="1.1"/><circle cx="8.1" cy="5.4" r="1.9" fill="none" stroke="#ccc" stroke-width="1.1"/><circle cx="3.8" cy="10.4" r="1.9" fill="none" stroke="#ccc" stroke-width="1.1"/><path d="M10.5 13.5 L13.5 10.5 V13.5Z" fill="#6cc9a5"/></svg>
<div class="a" style="left:905px;top:665px;width:93px;height:20px;background:#262626;border-radius:3px"></div>
<div class="t" style="left:910px;top:670.69px;font-size:11px;color:#555;">F</div>
<div class="t" style="left:921px;top:669.84px;font-size:12px;color:#e6e6e6;">0</div>
<svg style="left:501px;top:692px;" width="9" height="11" viewBox="0 0 9 11"><path d="M2 5 V3 A2.5 2.5 0 0 1 7 3 V5" fill="none" stroke="#ccc" stroke-width="1.2"/><rect x="0.5" y="5" width="8" height="6" fill="#ccc"/><rect x="4" y="7" width="1.2" height="2" fill="#555"/></svg>
<svg style="left:517px;top:692px;" width="14" height="10" viewBox="0 0 14 10"><ellipse cx="7" cy="5" rx="6.5" ry="4" fill="none" stroke="#ccc" stroke-width="1"/><circle cx="7" cy="5" r="2" fill="#ccc"/></svg>
<svg style="left:536px;top:691px;" width="11" height="12" viewBox="0 0 11 12"><path d="M5.5 0.5 L10.5 3 V9 L5.5 11.5 L0.5 9 V3Z M0.5 3 L5.5 5.5 L10.5 3 M5.5 5.5 V11.5" fill="none" stroke="#ccc" stroke-width="1"/></svg>
<svg style="left:555px;top:692px;" width="14" height="11" viewBox="0 0 14 11"><path d="M0 3.5 H2.5 L6 0.5 V10.5 L2.5 7.5 H0Z" fill="#ccc"/><path d="M8 3 Q9.5 5.5 8 8 M10 1 Q13 5.5 10 10" fill="none" stroke="#ccc" stroke-width="1.1"/></svg>
<svg style="left:575px;top:691px;" width="11" height="12" viewBox="0 0 11 12"><path d="M1 11 L7 5" stroke="#bbb" stroke-width="2.2"/><path d="M1.5 10.5 L6.5 5.5" stroke="#424242" stroke-width="0.9"/><path d="M6 3 L9 6 L11 4 L10 3 L11 1 L9.5 0.5 L8 2Z" fill="#ccc"/></svg>
<svg style="left:593px;top:693px;" width="14" height="8" viewBox="0 0 14 8"><path d="M0 4 L4 0 H14 V8 H4Z" fill="#ccc"/><circle cx="5" cy="4" r="1.5" fill="#424242"/></svg>
<div class="t" style="left:649px;top:689.84px;font-size:12px;color:#e6e6e6;">Name</div>
<div class="a" style="left:494px;top:705px;width:506px;height:259px;background:#2a2a2a;"></div>
<div class="a" style="left:494px;top:705px;width:494px;height:22px;background:#3a3a3a;"></div>
<div class="a" style="left:496px;top:707px;width:18px;height:18px;background:#2b2b2b;border-radius:3px"></div>
<div class="a" style="left:515px;top:707px;width:18px;height:18px;background:#2b2b2b;border-radius:3px"></div>
<div class="a" style="left:534px;top:707px;width:18px;height:18px;background:#2b2b2b;border-radius:3px"></div>
<svg style="left:517px;top:712px;" width="14" height="10" viewBox="0 0 14 10"><ellipse cx="7" cy="5" rx="6.5" ry="4" fill="none" stroke="#ccc" stroke-width="1"/><circle cx="7" cy="5" r="2" fill="#ccc"/></svg>
<div class="a" style="left:611px;top:708px;width:17px;height:16px;background:#383838;border-radius:3px"></div>
<svg style="left:615px;top:714px;" width="9" height="5" viewBox="0 0 9 5"><path d="M0.5 0.5 L4.5 4.5 L8.5 0.5" fill="none" stroke="#999" stroke-width="1"/></svg>
<div class="a" style="left:573px;top:708px;width:16px;height:17px;background:#b794f6;border-radius:3px"></div>
<svg style="left:593px;top:712px;" width="14" height="8" viewBox="0 0 14 8"><path d="M0 4 L4 0 H14 V8 H4Z" fill="#ccc"/><circle cx="5" cy="4" r="1.5" fill="#383838"/></svg>
<div class="a" style="left:946px;top:708px;width:10px;height:16px;background:#2b2b2b;border-radius:3px 0 0 3px"></div>
<div class="a" style="left:956px;top:708px;width:11px;height:16px;background:#2b2b2b;border-radius:0 3px 3px 0"></div>
<svg style="left:972px;top:711px;" width="11" height="11" viewBox="0 0 11 11"><circle cx="5.5" cy="5.5" r="4.8" fill="none" stroke="#888" stroke-width="1"/></svg>
<div class="a" style="left:494px;top:727px;width:494px;height:22px;background:#434957;"></div>
<div class="a" style="left:496px;top:729px;width:18px;height:18px;background:#2b2b2b;border-radius:3px"></div>
<div class="a" style="left:515px;top:729px;width:18px;height:18px;background:#2b2b2b;border-radius:3px"></div>
<svg style="left:518px;top:732px;" width="12" height="12" viewBox="0 0 12 12"><circle cx="6" cy="6" r="5" fill="none" stroke="#ccc" stroke-width="1.1"/><path d="M3 6 L5.5 8.5 L10 3" fill="none" stroke="#ccc" stroke-width="1.4"/></svg>
<div class="a" style="left:573px;top:730px;width:16px;height:17px;background:#6390e6;border-radius:3px"></div>
<svg style="left:593px;top:734px;" width="14" height="8" viewBox="0 0 14 8"><path d="M0 4 L4 0 H14 V8 H4Z" fill="#ccc"/><circle cx="5" cy="4" r="1.5" fill="#383838"/></svg>
<div class="a" style="left:946px;top:730px;width:10px;height:16px;background:#2b2b2b;border-radius:3px 0 0 3px"></div>
<div class="a" style="left:956px;top:730px;width:11px;height:16px;background:#2b2b2b;border-radius:0 3px 3px 0"></div>
<svg style="left:972px;top:733px;" width="11" height="11" viewBox="0 0 11 11"><circle cx="5.5" cy="5.5" r="4.8" fill="none" stroke="#888" stroke-width="1"/></svg>
<div class="a" style="left:494px;top:749px;width:494px;height:22px;background:#383838;"></div>
<div class="a" style="left:496px;top:751px;width:18px;height:18px;background:#2b2b2b;border-radius:3px"></div>
<div class="a" style="left:515px;top:751px;width:18px;height:18px;background:#2b2b2b;border-radius:3px"></div>
<svg style="left:518px;top:754px;" width="12" height="12" viewBox="0 0 12 12"><circle cx="6" cy="6" r="5" fill="none" stroke="#ccc" stroke-width="1.1"/><path d="M3 6 L5.5 8.5 L10 3" fill="none" stroke="#ccc" stroke-width="1.4"/></svg>
<div class="a" style="left:573px;top:752px;width:16px;height:17px;background:#6390e6;border-radius:3px"></div>
<svg style="left:593px;top:756px;" width="14" height="8" viewBox="0 0 14 8"><path d="M0 4 L4 0 H14 V8 H4Z" fill="#ccc"/><circle cx="5" cy="4" r="1.5" fill="#383838"/></svg>
<div class="a" style="left:946px;top:752px;width:10px;height:16px;background:#2b2b2b;border-radius:3px 0 0 3px"></div>
<div class="a" style="left:956px;top:752px;width:11px;height:16px;background:#2b2b2b;border-radius:0 3px 3px 0"></div>
<svg style="left:972px;top:755px;" width="11" height="11" viewBox="0 0 11 11"><circle cx="5.5" cy="5.5" r="4.8" fill="none" stroke="#888" stroke-width="1"/></svg>
<div class="a" style="left:494px;top:771px;width:494px;height:22px;background:#383838;"></div>
<div class="a" style="left:496px;top:773px;width:18px;height:18px;background:#2b2b2b;border-radius:3px"></div>
<div class="a" style="left:515px;top:773px;width:18px;height:18px;background:#2b2b2b;border-radius:3px"></div>
<svg style="left:518px;top:776px;" width="12" height="12" viewBox="0 0 12 12"><circle cx="6" cy="6" r="5" fill="none" stroke="#ccc" stroke-width="1.1"/><path d="M3 6 L5.5 8.5 L10 3" fill="none" stroke="#ccc" stroke-width="1.4"/></svg>
<div class="a" style="left:573px;top:774px;width:16px;height:17px;background:#6390e6;border-radius:3px"></div>
<svg style="left:593px;top:778px;" width="14" height="8" viewBox="0 0 14 8"><path d="M0 4 L4 0 H14 V8 H4Z" fill="#ccc"/><circle cx="5" cy="4" r="1.5" fill="#383838"/></svg>
<div class="a" style="left:946px;top:774px;width:10px;height:16px;background:#2b2b2b;border-radius:3px 0 0 3px"></div>
<div class="a" style="left:956px;top:774px;width:11px;height:16px;background:#2b2b2b;border-radius:0 3px 3px 0"></div>
<svg style="left:972px;top:777px;" width="11" height="11" viewBox="0 0 11 11"><circle cx="5.5" cy="5.5" r="4.8" fill="none" stroke="#888" stroke-width="1"/></svg>
<svg style="left:647px;top:709px;" width="16" height="15" viewBox="0 0 16 15"><path d="M0.5 3 V0.5 H3 M13 0.5 H15.5 V3 M15.5 12 V14.5 H13 M3 14.5 H0.5 V12" fill="none" stroke="#ddd" stroke-width="1"/><path d="M0.5 5 V10 M15.5 5 V10" stroke="#ddd" stroke-width="1" stroke-dasharray="1 1.5"/><path d="M4 3.5 H12 V5.5 H9 V12 H7 V5.5 H4Z" fill="#e8d66a"/></svg>
<div class="t" style="left:667px;top:710.84px;font-size:12px;color:#eeeeee;">Text Shape</div>
<svg style="left:667px;top:733px;" width="15" height="12" viewBox="0 0 15 12"><text x="0" y="6" font-size="7.5" fill="#9fc6ff" font-family="Liberation Sans">abc</text><path d="M0 9 H4 M5.5 9 H9.5 M11 9 H15 M0 11.5 H15" stroke="#9fc6ff" stroke-width="1"/></svg>
<div class="t" style="left:686px;top:732.84px;font-size:12px;color:#eeeeee;">String Generator [String]</div>
<svg style="left:647px;top:753px;" width="16" height="13" viewBox="0 0 16 13"><rect x="0.5" y="0.5" width="15" height="12" fill="none" stroke="#9fc6ff" stroke-width="1"/><rect x="0.5" y="0.5" width="15" height="2.5" fill="#9fc6ff"/><path d="M0.5 6 H15.5 M0.5 9.5 H15.5 M5.5 3 V12.5" stroke="#9fc6ff" stroke-width="1"/></svg>
<svg style="left:647px;top:775px;" width="16" height="13" viewBox="0 0 16 13"><rect x="0.5" y="0.5" width="15" height="12" fill="none" stroke="#9fc6ff" stroke-width="1"/><rect x="0.5" y="0.5" width="15" height="2.5" fill="#9fc6ff"/><path d="M0.5 6 H15.5 M0.5 9.5 H15.5 M5.5 3 V12.5" stroke="#9fc6ff" stroke-width="1"/></svg>
<div class="t" style="left:667px;top:754.84px;font-size:12px;color:#eeeeee;">Cities</div>
<div class="t" style="left:667px;top:776.84px;font-size:12px;color:#eeeeee;">Country</div>
<svg style="left:948px;top:712px;" width="7" height="7" viewBox="0 0 7 7"><path d="M0 3.5 L3 0 H6.5 V7 H3Z" fill="#d9c27a"/></svg>
<svg style="left:959px;top:712px;" width="7" height="7" viewBox="0 0 7 7"><path d="M0 0 H3.5 L6.5 3.5 L3.5 7 H0Z" fill="#7a7a7a"/></svg>
<div class="a" style="left:946px;top:708px;width:10px;height:16px;background:transparent;border:1px solid #b09a50"></div>
<svg style="left:948px;top:734px;" width="7" height="7" viewBox="0 0 7 7"><path d="M0 3.5 L3 0 H6.5 V7 H3Z" fill="#d9c27a"/></svg>
<svg style="left:959px;top:734px;" width="7" height="7" viewBox="0 0 7 7"><path d="M0 0 H3.5 L6.5 3.5 L3.5 7 H0Z" fill="#cc55ee"/></svg>
<svg style="left:948px;top:756px;" width="7" height="7" viewBox="0 0 7 7"><path d="M0 3.5 L3 0 H6.5 V7 H3Z" fill="#666"/></svg>
<svg style="left:959px;top:756px;" width="7" height="7" viewBox="0 0 7 7"><path d="M0 0 H3.5 L6.5 3.5 L3.5 7 H0Z" fill="#cc66ee"/></svg>
<div class="a" style="left:956px;top:752px;width:11px;height:16px;background:transparent;border:1px solid #a050c0"></div>
<svg style="left:948px;top:778px;" width="7" height="7" viewBox="0 0 7 7"><path d="M0 3.5 L3 0 H6.5 V7 H3Z" fill="#666"/></svg>
<svg style="left:959px;top:778px;" width="7" height="7" viewBox="0 0 7 7"><path d="M0 0 H3.5 L6.5 3.5 L3.5 7 H0Z" fill="#cc66ee"/></svg>
<div class="a" style="left:956px;top:774px;width:11px;height:16px;background:transparent;border:1px solid #a050c0"></div>
<div class="a" style="left:988px;top:705px;width:12px;height:259px;background:#2e2e2e;"></div>
<div class="a" style="left:988px;top:706px;width:10px;height:254px;background:#4a4a4a;border-radius:5px"></div>
<div class="a" style="left:497px;top:964px;width:488px;height:10px;background:#4a4a4a;border-radius:5px"></div>
<div class="a" style="left:494px;top:974px;width:506px;height:2px;background:#2a2a2a;"></div>
<div class="a" style="left:494px;top:976px;width:506px;height:22px;background:#474747;"></div>
<div class="a" style="left:497px;top:977px;width:19px;height:20px;background:#2b2b2b;border:1px solid #1e1e1e;border-radius:4px;box-shadow:inset 0 1px 0 rgba(255,255,255,0.18)"></div>
<svg style="left:501px;top:983px;" width="12" height="8" viewBox="0 0 12 8"><path d="M0 4 L3.5 0 H12 V8 H3.5Z" fill="#ddd"/><circle cx="4.5" cy="4" r="1.3" fill="#333"/></svg>
<div class="t" style="left:520px;top:981.84px;font-size:12px;color:#e6e6e6;">1 selected</div>
<div class="a" style="left:792px;top:977px;width:19px;height:20px;background:#2b2b2b;border:1px solid #1e1e1e;border-radius:4px;box-shadow:inset 0 1px 0 rgba(255,255,255,0.18)"></div>
<svg style="left:796px;top:981px;" width="11" height="11" viewBox="0 0 11 11"><rect x="0.6" y="0.6" width="9.8" height="9.8" fill="none" stroke="#ccc" stroke-width="1.2"/><rect x="4" y="4" width="3" height="3" fill="#ccc"/></svg>
<div class="a" style="left:815px;top:978px;width:182px;height:19px;background:#5a5a5a;border-radius:4px"></div>
<div class="a" style="left:816px;top:979px;width:86px;height:17px;background:#262626;border-radius:3px"></div>
<svg style="left:822px;top:982px;" width="12" height="11" viewBox="0 0 12 11"><rect x="0" y="0" width="9" height="2" fill="#2ecc71"/><rect x="3" y="4.5" width="9" height="2" fill="#2ecc71"/><rect x="0" y="9" width="9" height="2" fill="#2ecc71"/></svg>
<div class="t" style="left:837px;top:981.84px;font-size:12px;color:#eeeeee;">Time Editor</div>
<svg style="left:909px;top:981px;" width="12" height="12" viewBox="0 0 12 12"><path d="M0.5 0 V11.5 H12" fill="none" stroke="#ccc" stroke-width="1"/><path d="M1 10 L11 3" stroke="#ccc" stroke-width="1"/></svg>
<div class="t" style="left:926px;top:981.84px;font-size:12px;color:#eeeeee;">Graph Editor</div>
<div class="a" style="left:1000px;top:641px;width:4px;height:22px;background:#474747;"></div>
<div class="a" style="left:1000px;top:663px;width:4px;height:335px;background:#2e2e2e;"></div>
<div class="a" style="left:1004px;top:641px;width:910px;height:22px;background:#262626;"></div>
<div class="a" style="left:1004px;top:643px;width:905px;height:20px;background:#474747;border-radius:0 5px 0 0"></div>
<div class="t" style="left:1203px;top:646.84px;font-size:12px;color:#e0e0e0;transform:translateX(-50%);">Composition 1</div>
<div class="a" style="left:1004px;top:663px;width:910px;height:24px;background:#1e1e1e;"></div>
<div class="a" style="left:1008px;top:663px;width:905px;height:24px;background:#232323;"></div>
<div class="a" style="left:1004px;top:687px;width:910px;height:277px;background:#2a2a2a;"></div>
<div class="a" style="left:1004px;top:687px;width:4px;height:17px;background:#1e1e1e;"></div>
<div class="a" style="left:1004px;top:704px;width:10px;height:256px;background:#1e1e1e;"></div>
<div class="a" style="left:1008px;top:687px;width:905px;height:17px;background:#474747;"></div>
<svg style="left:1008px;top:680px;" width="905" height="7" viewBox="0 0 905 7"><rect x="4.8" y="0" width="1" height="7" fill="#aaa"/><rect x="15.5" y="4" width="1" height="3" fill="#aaa"/><rect x="26.2" y="4" width="1" height="3" fill="#aaa"/><rect x="36.9" y="4" width="1" height="3" fill="#aaa"/><rect x="47.6" y="4" width="1" height="3" fill="#aaa"/><rect x="58.3" y="0" width="1" height="7" fill="#aaa"/><rect x="69.0" y="4" width="1" height="3" fill="#aaa"/><rect x="79.7" y="4" width="1" height="3" fill="#aaa"/><rect x="90.3" y="4" width="1" height="3" fill="#aaa"/><rect x="101.0" y="4" width="1" height="3" fill="#aaa"/><rect x="111.7" y="0" width="1" height="7" fill="#aaa"/><rect x="122.4" y="4" width="1" height="3" fill="#aaa"/><rect x="133.1" y="4" width="1" height="3" fill="#aaa"/><rect x="143.8" y="4" width="1" height="3" fill="#aaa"/><rect x="154.5" y="4" width="1" height="3" fill="#aaa"/><rect x="165.2" y="0" width="1" height="7" fill="#aaa"/><rect x="175.9" y="4" width="1" height="3" fill="#aaa"/><rect x="186.6" y="4" width="1" height="3" fill="#aaa"/><rect x="197.3" y="4" width="1" height="3" fill="#aaa"/><rect x="208.0" y="4" width="1" height="3" fill="#aaa"/><rect x="218.7" y="0" width="1" height="7" fill="#aaa"/><rect x="229.4" y="4" width="1" height="3" fill="#aaa"/><rect x="240.1" y="4" width="1" height="3" fill="#aaa"/><rect x="250.8" y="4" width="1" height="3" fill="#aaa"/><rect x="261.4" y="4" width="1" height="3" fill="#aaa"/><rect x="272.1" y="0" width="1" height="7" fill="#aaa"/><rect x="282.8" y="4" width="1" height="3" fill="#aaa"/><rect x="293.5" y="4" width="1" height="3" fill="#aaa"/><rect x="304.2" y="4" width="1" height="3" fill="#aaa"/><rect x="314.9" y="4" width="1" height="3" fill="#aaa"/><rect x="325.6" y="0" width="1" height="7" fill="#aaa"/><rect x="336.3" y="4" width="1" height="3" fill="#aaa"/><rect x="347.0" y="4" width="1" height="3" fill="#aaa"/><rect x="357.7" y="4" width="1" height="3" fill="#aaa"/><rect x="368.4" y="4" width="1" height="3" fill="#aaa"/><rect x="379.1" y="0" width="1" height="7" fill="#aaa"/><rect x="389.8" y="4" width="1" height="3" fill="#aaa"/><rect x="400.5" y="4" width="1" height="3" fill="#aaa"/><rect x="411.2" y="4" width="1" height="3" fill="#aaa"/><rect x="421.9" y="4" width="1" height="3" fill="#aaa"/><rect x="432.5" y="0" width="1" height="7" fill="#aaa"/><rect x="443.2" y="4" width="1" height="3" fill="#aaa"/><rect x="453.9" y="4" width="1" height="3" fill="#aaa"/><rect x="464.6" y="4" width="1" height="3" fill="#aaa"/><rect x="475.3" y="4" width="1" height="3" fill="#aaa"/><rect x="486.0" y="0" width="1" height="7" fill="#aaa"/><rect x="496.7" y="4" width="1" height="3" fill="#aaa"/><rect x="507.4" y="4" width="1" height="3" fill="#aaa"/><rect x="518.1" y="4" width="1" height="3" fill="#aaa"/><rect x="528.8" y="4" width="1" height="3" fill="#aaa"/><rect x="539.5" y="0" width="1" height="7" fill="#aaa"/><rect x="550.2" y="4" width="1" height="3" fill="#aaa"/><rect x="560.9" y="4" width="1" height="3" fill="#aaa"/><rect x="571.6" y="4" width="1" height="3" fill="#aaa"/><rect x="582.3" y="4" width="1" height="3" fill="#aaa"/><rect x="593.0" y="0" width="1" height="7" fill="#aaa"/><rect x="603.7" y="4" width="1" height="3" fill="#aaa"/><rect x="614.3" y="4" width="1" height="3" fill="#aaa"/><rect x="625.0" y="4" width="1" height="3" fill="#aaa"/><rect x="635.7" y="4" width="1" height="3" fill="#aaa"/><rect x="646.4" y="0" width="1" height="7" fill="#aaa"/><rect x="657.1" y="4" width="1" height="3" fill="#aaa"/><rect x="667.8" y="4" width="1" height="3" fill="#aaa"/><rect x="678.5" y="4" width="1" height="3" fill="#aaa"/><rect x="689.2" y="4" width="1" height="3" fill="#aaa"/><rect x="699.9" y="0" width="1" height="7" fill="#aaa"/><rect x="710.6" y="4" width="1" height="3" fill="#aaa"/><rect x="721.3" y="4" width="1" height="3" fill="#aaa"/><rect x="732.0" y="4" width="1" height="3" fill="#aaa"/><rect x="742.7" y="4" width="1" height="3" fill="#aaa"/><rect x="753.4" y="0" width="1" height="7" fill="#aaa"/><rect x="764.1" y="4" width="1" height="3" fill="#aaa"/><rect x="774.8" y="4" width="1" height="3" fill="#aaa"/><rect x="785.4" y="4" width="1" height="3" fill="#aaa"/><rect x="796.1" y="4" width="1" height="3" fill="#aaa"/><rect x="806.8" y="0" width="1" height="7" fill="#aaa"/><rect x="817.5" y="4" width="1" height="3" fill="#aaa"/><rect x="828.2" y="4" width="1" height="3" fill="#aaa"/><rect x="838.9" y="4" width="1" height="3" fill="#aaa"/><rect x="849.6" y="4" width="1" height="3" fill="#aaa"/><rect x="860.3" y="0" width="1" height="7" fill="#aaa"/><rect x="871.0" y="4" width="1" height="3" fill="#aaa"/><rect x="881.7" y="4" width="1" height="3" fill="#aaa"/><rect x="892.4" y="4" width="1" height="3" fill="#aaa"/><rect x="903.1" y="4" width="1" height="3" fill="#aaa"/></svg>
<div class="t" style="left:1013.3px;top:665.84px;font-size:12px;color:#dcdcdc;transform:translateX(-50%);">0</div>
<div class="t" style="left:1066.76875px;top:665.84px;font-size:12px;color:#dcdcdc;transform:translateX(-50%);">15</div>
<div class="t" style="left:1120.2375px;top:665.84px;font-size:12px;color:#dcdcdc;transform:translateX(-50%);">30</div>
<div class="t" style="left:1173.70625px;top:665.84px;font-size:12px;color:#dcdcdc;transform:translateX(-50%);">45</div>
<div class="t" style="left:1227.175px;top:665.84px;font-size:12px;color:#dcdcdc;transform:translateX(-50%);">60</div>
<div class="t" style="left:1280.64375px;top:665.84px;font-size:12px;color:#dcdcdc;transform:translateX(-50%);">75</div>
<div class="t" style="left:1334.1125px;top:665.84px;font-size:12px;color:#dcdcdc;transform:translateX(-50%);">90</div>
<div class="t" style="left:1387.58125px;top:665.84px;font-size:12px;color:#dcdcdc;transform:translateX(-50%);">105</div>
<div class="t" style="left:1441.05px;top:665.84px;font-size:12px;color:#dcdcdc;transform:translateX(-50%);">120</div>
<div class="t" style="left:1494.51875px;top:665.84px;font-size:12px;color:#dcdcdc;transform:translateX(-50%);">135</div>
<div class="t" style="left:1547.9875px;top:665.84px;font-size:12px;color:#dcdcdc;transform:translateX(-50%);">150</div>
<div class="t" style="left:1601.45625px;top:665.84px;font-size:12px;color:#dcdcdc;transform:translateX(-50%);">165</div>
<div class="t" style="left:1654.925px;top:665.84px;font-size:12px;color:#dcdcdc;transform:translateX(-50%);">180</div>
<div class="t" style="left:1708.39375px;top:665.84px;font-size:12px;color:#dcdcdc;transform:translateX(-50%);">195</div>
<div class="t" style="left:1761.8625px;top:665.84px;font-size:12px;color:#dcdcdc;transform:translateX(-50%);">210</div>
<div class="t" style="left:1815.33125px;top:665.84px;font-size:12px;color:#dcdcdc;transform:translateX(-50%);">225</div>
<div class="t" style="left:1868.8px;top:665.84px;font-size:12px;color:#dcdcdc;transform:translateX(-50%);">240</div>
<div class="a" style="left:1015px;top:707px;width:889px;height:17px;background:#b794f6;border-radius:2px 4px 4px 2px"></div>
<div class="t" style="left:1023px;top:709.84px;font-size:12px;color:#ffffff;">Text Shape</div>
<div class="a" style="left:1014px;top:728px;width:891px;height:19px;background:#d0d0d0;border-radius:2px"></div>
<div class="a" style="left:1016px;top:730px;width:887px;height:15px;background:repeating-linear-gradient(-45deg,#6891e3 0px,#6891e3 11.3px,#7aa6f6 11.3px,#7aa6f6 12.3px,#5a83d3 12.3px,#5a83d3 23.5px,#78a3f3 23.5px,#78a3f3 24.5px);"></div>
<div class="a" style="left:1016px;top:730px;width:887px;height:15px;background-image:radial-gradient(circle,rgba(45,80,165,0.6) 0.9px,transparent 1.2px),linear-gradient(rgba(170,225,255,0.25),rgba(170,225,255,0.25));background-size:3px 3px,100% 100%"></div>
<div class="t" style="left:1023px;top:731.84px;font-size:12px;color:#ffffff;">String Generator [String]</div>
<div class="a" style="left:1015px;top:751px;width:889px;height:17px;background:repeating-linear-gradient(-45deg,#6891e3 0px,#6891e3 11.3px,#7aa6f6 11.3px,#7aa6f6 12.3px,#5a83d3 12.3px,#5a83d3 23.5px,#78a3f3 23.5px,#78a3f3 24.5px);"></div>
<div class="t" style="left:1023px;top:753.84px;font-size:12px;color:#ffffff;">Cities</div>
<div class="a" style="left:1015px;top:773px;width:889px;height:17px;background:repeating-linear-gradient(-45deg,#6891e3 0px,#6891e3 11.3px,#7aa6f6 11.3px,#7aa6f6 12.3px,#5a83d3 12.3px,#5a83d3 23.5px,#78a3f3 23.5px,#78a3f3 24.5px);"></div>
<div class="t" style="left:1023px;top:775.84px;font-size:12px;color:#ffffff;">Country</div>
<svg style="left:1008px;top:677px;" width="14" height="9" viewBox="0 0 14 9"><path d="M0 0 H14 L7 9Z" fill="#7ccbb0"/></svg>
<div class="a" style="left:1010px;top:686px;width:6px;height:18px;background:#7ccbb0;"></div>
<div class="a" style="left:1014.5px;top:704px;width:1.5px;height:256px;background:#5aa88e;"></div>
<div class="a" style="left:1905px;top:686px;width:5px;height:18px;background:#7ccbb0;"></div>
<div class="a" style="left:1002px;top:823px;width:1px;height:3px;background:#888;"></div>
<div class="a" style="left:1002px;top:828px;width:1px;height:3px;background:#888;"></div>
<div class="a" style="left:1002px;top:833px;width:1px;height:3px;background:#888;"></div>
<div class="a" style="left:1002px;top:838px;width:1px;height:3px;background:#888;"></div>
<div class="a" style="left:1008px;top:964px;width:902px;height:10px;background:#4a4a4a;border-radius:5px"></div>
<div class="a" style="left:1004px;top:974px;width:910px;height:2px;background:#2a2a2a;"></div>
<div class="a" style="left:1004px;top:976px;width:910px;height:22px;background:#474747;"></div>
<div class="a" style="left:1011px;top:977px;width:18px;height:20px;background:#2b2b2b;border:1px solid #1e1e1e;border-radius:4px;box-shadow:inset 0 1px 0 rgba(255,255,255,0.18)"></div>
<svg style="left:1014px;top:981px;" width="12" height="12" viewBox="0 0 12 12"><rect x="0" y="0" width="12" height="1.5" fill="#ddd"/><rect x="0" y="3.5" width="12" height="1.5" fill="#ddd"/><rect x="0" y="7" width="5" height="1.5" fill="#ddd"/><rect x="7" y="7" width="5" height="1.5" fill="#ddd"/><rect x="0" y="10.5" width="3" height="1.5" fill="#ddd"/><rect x="5" y="10.5" width="2" height="1.5" fill="#ddd"/></svg>
<div class="a" style="left:1031px;top:979px;width:150px;height:16px;background:#262626;border-radius:3px"></div>
<div class="t" style="left:1033px;top:981.84px;font-size:12px;color:#eeeeee;">Default Keyframe Layer</div>
<div class="a" style="left:1187px;top:979px;width:70px;height:16px;background:#262626;border-radius:3px"></div>
<div class="t" style="left:1192px;top:982.69px;font-size:11px;color:#555;">F</div>
<div class="t" style="left:1204px;top:980.84px;font-size:12px;color:#dddddd;">-</div>
<div class="t" style="left:1263px;top:981.84px;font-size:12px;color:#e6e6e6;">Align:</div>
<div class="a" style="left:1300px;top:979px;width:53px;height:17px;background:#1e1e1e;border-radius:4px"></div>
<div class="a" style="left:1301px;top:980px;width:16.5px;height:15px;background:#2b2b2b;border-radius:3px"></div>
<div class="a" style="left:1318px;top:980px;width:16.5px;height:15px;background:#2b2b2b;border-radius:3px"></div>
<div class="a" style="left:1335px;top:980px;width:16.5px;height:15px;background:#2b2b2b;border-radius:3px"></div>
<svg style="left:1300px;top:979px;" width="53" height="17" viewBox="0 0 53 17"><rect x="2" y="1" width="1" height="15" fill="#ddd"/><rect x="5" y="4" width="2" height="2" fill="#6cc9a5"/><rect x="8.3" y="4" width="2.7" height="2" fill="#ddd"/><rect x="5" y="10" width="2" height="2" fill="#6cc9a5"/><rect x="8.3" y="10" width="6.7" height="2" fill="#ddd"/><rect x="26.1" y="1" width="1" height="15" fill="#ddd"/><rect x="25.6" y="4" width="2" height="2" fill="#6cc9a5"/><rect x="25.6" y="10" width="2" height="2" fill="#6cc9a5"/><rect x="23" y="4" width="1.2" height="2" fill="#ddd"/><rect x="28.6" y="4" width="1.4" height="2" fill="#ddd"/><rect x="20.8" y="10" width="3.2" height="2" fill="#ddd"/><rect x="29" y="10" width="2.8" height="2" fill="#ddd"/><rect x="49" y="1" width="1" height="15" fill="#ddd"/><rect x="45" y="4" width="2" height="2" fill="#6cc9a5"/><rect x="41" y="4" width="2.7" height="2" fill="#ddd"/><rect x="45" y="10" width="2" height="2" fill="#6cc9a5"/><rect x="37" y="10" width="6.7" height="2" fill="#ddd"/></svg>
<div class="a" style="left:1356px;top:978px;width:18px;height:18px;background:#2b2b2b;border:1px solid #1e1e1e;border-radius:4px;box-shadow:inset 0 1px 0 rgba(255,255,255,0.18)"></div>
<svg style="left:1356px;top:978px;" width="18" height="18" viewBox="0 0 18 18"><path d="M3.4 3.6 H14.8 V14.3 H3.4Z" fill="none" stroke="#777" stroke-width="0.8"/><rect x="2.2" y="2.4" width="2.4" height="2.4" fill="#2b2b2b" stroke="#999" stroke-width="0.7"/><rect x="13.6" y="2.4" width="2.4" height="2.4" fill="#2b2b2b" stroke="#999" stroke-width="0.7"/><rect x="2.2" y="13.1" width="2.4" height="2.4" fill="#2b2b2b" stroke="#999" stroke-width="0.7"/><rect x="13.6" y="13.1" width="2.4" height="2.4" fill="#2b2b2b" stroke="#999" stroke-width="0.7"/><rect x="8.3" y="8.3" width="1.6" height="1.6" fill="#ddd"/></svg>
<div class="a" style="left:1377px;top:977px;width:31px;height:19px;background:#2b2b2b;border:1px solid #1e1e1e;border-radius:4px"></div>
<div class="a" style="left:1378px;top:978px;width:18px;height:17px;background:#383838;border-radius:3px 0 0 3px"></div>
<div class="a" style="left:1396px;top:978px;width:1px;height:17px;background:#222;"></div>
<svg style="left:1380px;top:979px;" width="14" height="14" viewBox="0 0 14 14"><path d="M12 6.5 C10 1.2 3.8 1 2.4 5 C1.7 7.6 4 10.2 7.5 12.3" fill="none" stroke="#cfcfcf" stroke-width="2.3"/></svg>
<svg style="left:1400px;top:983px;" width="6" height="6" viewBox="0 0 6 6"><path d="M0.5 0.5 L5.5 3 L0.5 5.5Z" fill="none" stroke="#888" stroke-width="0.9"/></svg>
<div class="a" style="left:1412px;top:977px;width:31px;height:20px;background:#2b2b2b;border:1px solid #1e1e1e;border-radius:4px"></div>
<div class="a" style="left:1413px;top:978px;width:18px;height:18px;background:#383838;border-radius:3px 0 0 3px"></div>
<div class="a" style="left:1431px;top:978px;width:1px;height:18px;background:#222;"></div>
<svg style="left:1414px;top:980px;" width="16" height="15" viewBox="0 0 16 15"><rect x="1" y="7" width="3" height="1.2" fill="#ccc"/><rect x="5.5" y="1" width="1.1" height="13" fill="#ccc"/><rect x="8.5" y="4.8" width="1.1" height="5.5" fill="#ccc"/><rect x="11.5" y="7" width="3.5" height="1.2" fill="#ccc"/></svg>
<svg style="left:1434px;top:984px;" width="6" height="6" viewBox="0 0 6 6"><path d="M0.5 0.5 L5.5 3 L0.5 5.5Z" fill="none" stroke="#888" stroke-width="0.9"/></svg>
<svg style="left:1743px;top:980px;" width="14" height="14" viewBox="0 0 14 14"><circle cx="6" cy="6" r="5.3" fill="none" stroke="#ddd" stroke-width="1.1"/><path d="M3.5 6 H8.5" stroke="#ddd" stroke-width="1.1"/><path d="M10 10 L13 13" stroke="#ddd" stroke-width="1.5"/></svg>
<div class="a" style="left:1762px;top:984px;width:120px;height:5px;background:#3c3c3c;border-radius:3px"></div>
<svg style="left:1767px;top:987px;" width="1" height="1" viewBox="0 0 1 1"><circle cx="0" cy="0" r="5" fill="#6cc9a5" stroke="#4a9a7a" stroke-width="1"/><circle cx="0" cy="0" r="1.5" fill="#4a9a7a"/></svg>
<svg style="left:1887px;top:980px;" width="14" height="14" viewBox="0 0 14 14"><circle cx="6" cy="6" r="5.3" fill="none" stroke="#ddd" stroke-width="1.1"/><path d="M3.5 6 H8.5 M6 3.5 V8.5" stroke="#ddd" stroke-width="1.1"/><path d="M10 10 L13 13" stroke="#ddd" stroke-width="1.5"/></svg>
<div class="a" style="left:494px;top:998px;width:1420px;height:6px;background:#141414;"></div>
<div class="a" style="left:494px;top:1004px;width:1420px;height:21px;background:#3a3a3a;"></div>
<div class="a" style="left:498px;top:1010px;width:2px;height:2px;background:#888;"></div>
<div class="a" style="left:498px;top:1014px;width:2px;height:2px;background:#888;"></div>
<div class="a" style="left:498px;top:1018px;width:2px;height:2px;background:#888;"></div>
<div class="a" style="left:507px;top:1006px;width:17px;height:18px;background:#2b2b2b;border:1px solid #1e1e1e;border-radius:4px;box-shadow:inset 0 1px 0 rgba(255,255,255,0.18)"></div>
<svg style="left:510px;top:1009px;" width="12" height="12" viewBox="0 0 12 12"><path d="M0 0 H12 V8 H9 V11 L6 8 H0Z" fill="#ddd"/><path d="M2 2 H10 M2 4 H10 M2 6 H10" stroke="#333" stroke-width="0.9"/></svg>
<div class="a" style="left:528px;top:1007px;width:19px;height:15px;background:#2ecc71;border-radius:3px"></div>
<div class="t" style="left:537.5px;top:1009.69px;font-size:11px;color:#111;transform:translateX(-50%);">1</div>
<svg style="left:557px;top:1014px;" width="1" height="1" viewBox="0 0 1 1"><circle cx="0" cy="0" r="3" fill="#2ecc71"/></svg>
<div class="t" style="left:565px;top:1008.84px;font-size:12px;color:#e0e0e0">Connected: <span style="color:#d070f0">Country</span> to <span style="color:#d9c27a">Formatted String.</span></div>
<div class="t" style="right:439px;top:1009.01px;font-size:11.8px;color:#e6e6e6;font-style:italic;transform:scaleX(0.8785);transform-origin:right;">Click to see next message</div>
<div class="a" style="left:1488px;top:1006px;width:80px;height:18px;background:#cdb56a;border-radius:2px"></div>
<div class="t" style="left:1494px;top:1009.84px;font-size:12px;color:#1a1a1a;transform:scaleX(0.9393);transform-origin:left;">Feedback</div>
<div class="a" style="left:1571px;top:1006px;width:109px;height:18px;background:#2ecc71;border-radius:2px"></div>
<div class="t" style="left:1577px;top:1009.84px;font-size:12px;color:#1a1a1a;transform:scaleX(0.9646);transform-origin:left;">Upgrade to Pro</div>
<div class="a" style="left:1683px;top:1006px;width:119px;height:18px;background:#b794f6;border-radius:2px"></div>
<div class="t" style="left:1689px;top:1009.84px;font-size:12px;color:#1a1a1a;transform:scaleX(0.9794);transform-origin:left;">Update Available</div>
<div class="a" style="left:1805px;top:1006px;width:106px;height:18px;background:#3fa9f5;border-radius:2px"></div>
<div class="t" style="left:1810.5px;top:1009.84px;font-size:12px;color:#1a1a1a;transform:scaleX(0.9471);transform-origin:left;">Tips and Tricks</div>
<svg style="left:1549px;top:1009px;" width="13" height="13" viewBox="0 0 13 13"><path d="M1 1 H8 L11 4 V12 H1Z" fill="#f4f4f4"/><path d="M4 10 L11 3" stroke="#e86a3a" stroke-width="2.2"/></svg>
<svg style="left:1660px;top:1010px;" width="14" height="11" viewBox="0 0 14 11"><ellipse cx="3.5" cy="6" rx="3.3" ry="4.5" fill="#f2c530"/><ellipse cx="10.5" cy="6" rx="3.3" ry="4.5" fill="#f2c530"/></svg>
<svg style="left:1782px;top:1008px;" width="14" height="14" viewBox="0 0 14 14"><circle cx="7" cy="7.5" r="6" fill="#f5c542"/><path d="M1 3 L4.5 0.5 L6 4Z" fill="#e040a0"/><path d="M9 1 L13 3 L10.5 5Z" fill="#40a0e0"/><circle cx="5" cy="7" r="0.9" fill="#633"/><circle cx="9" cy="7" r="0.9" fill="#633"/></svg>
<svg style="left:1892px;top:1008px;" width="13" height="13" viewBox="0 0 13 13"><path d="M12.5 0.5 L6 2.5 L2 7.5 L5.5 11 L10.5 7Z" fill="#e8e8f0"/><circle cx="8.5" cy="4.5" r="1.4" fill="#40a0e0"/><path d="M3 9 L0 13 L4.5 10.5Z" fill="#f05030"/><path d="M2 7.5 L0.5 6 L3.5 4Z M5.5 11 L7 12.5 L9 9.5Z" fill="#e04040"/></svg>
<svg style="left:0;top:0;pointer-events:none" width="1920" height="1029" viewBox="0 0 1920 1029"><rect x="176.5" y="658.5" width="96" height="24" fill="none" stroke="#b8ec14" stroke-width="3"/><rect x="640.5" y="703.5" width="100" height="25" fill="none" stroke="#b8ec14" stroke-width="3"/><path d="M234 718 L978 759" stroke="#b8ec14" stroke-width="3.2" stroke-linecap="round"/><path d="M231 742 L978 781" stroke="#b8ec14" stroke-width="3.2" stroke-linecap="round"/></svg>
</body></html>
